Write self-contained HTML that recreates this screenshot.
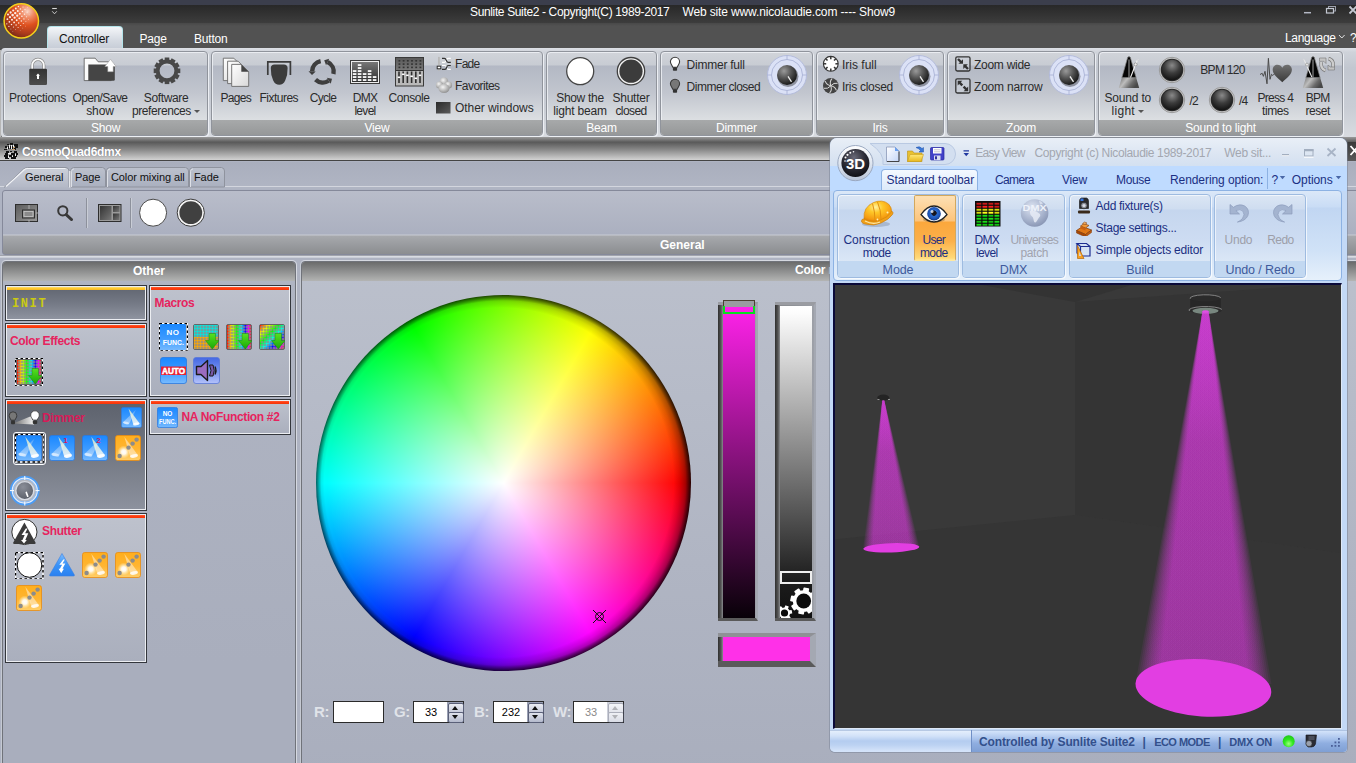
<!DOCTYPE html>
<html><head><meta charset="utf-8"><title>Sunlite Suite2</title>
<style>
*{box-sizing:border-box;margin:0;padding:0}
html,body{width:1356px;height:763px;overflow:hidden;background:#aeb3c1;font-family:"Liberation Sans",sans-serif;font-size:12px;color:#222}
.abs{position:absolute}
#top{position:absolute;left:0;top:0;width:1356px;height:138px;background:#4d4d4d}
#strip{position:absolute;left:0;top:0;width:1356px;height:5px;background:#3b3e4c}
#titlebar{position:absolute;left:0;top:5px;width:1356px;height:18px;background:linear-gradient(#282828,#3d3d3d)}
#title{position:absolute;left:470px;top:5px;color:#fff;font-size:12px;white-space:pre;letter-spacing:-0.3px}
#tabrow{position:absolute;left:0;top:23px;width:1356px;height:25px;background:linear-gradient(#484848,#525252 3px)}
.rtab{position:absolute;top:32px;letter-spacing:-0.2px;color:#fff;font-size:12px}
#tabsel{position:absolute;left:47px;top:26px;width:76px;height:23px;border-radius:4px 4px 0 0;background:linear-gradient(#f4f6f9,#d5dae2 60%,#c6ccd6);border:1px solid #b4e4ea;border-bottom:none}
#ribbon{position:absolute;left:1px;top:48px;width:1360px;height:90px;background:linear-gradient(#dde0e6,#cfd3da 4px,#c2c7d0 20px,#c9cdd5 60px,#d8dbe0 88px);border-radius:4px 0 0 4px}
.grp{position:absolute;top:51px;height:85px;border-radius:4px;border:1px solid #90949c;background:linear-gradient(#d1d4da 0,#c8ccd3 13px,#b3b8c4 14px,#c1c5ce 40px,#dcdfe2 68px);overflow:hidden;box-shadow:1px 1px 0 rgba(240,242,246,.9), inset 1px 1px 0 rgba(240,242,246,.8)}
.grp .cap{position:absolute;left:0;right:0;bottom:0;height:15px;background:linear-gradient(#a7a9aa,#969899);color:#fff;text-align:center;font-size:12px;line-height:16px;letter-spacing:-0.2px}
.lbl{position:absolute;color:#2b2b2b;font-size:12px;line-height:13px;text-align:center;white-space:nowrap;letter-spacing:-0.25px}

#bodybg{position:absolute;left:0;top:138px;width:1356px;height:625px;background:#aeb3c2}
#sep1{position:absolute;left:0;top:137px;width:1356px;height:5px;background:linear-gradient(#9a9a9a,#5c5c5c)}
#ctitle{position:absolute;left:0;top:142px;width:1356px;height:19px;background:linear-gradient(#585858,#8c8c8c 45%,#d2d2d2);border-bottom:1px solid #444}
#ctitle span{position:absolute;left:22px;top:3px;color:#fff;font-weight:bold;font-size:12px;letter-spacing:-0.3px;text-shadow:0 0 1px #667}
#tabs{position:absolute;left:0;top:162px;width:1356px;height:27px;background:linear-gradient(#a9aebd,#b0b5c3 24px,#d3d6de 24px,#d3d6de 25px,#b0b5c3 25px)}
.ptab{position:absolute;top:168px;height:19px;border:1px solid #8a8e98;border-bottom:none;border-radius:3px 3px 0 0;background:linear-gradient(#c2c6d1,#aeb3c1);font-size:12px;line-height:18px;text-align:center;color:#111;white-space:nowrap;box-shadow:inset 1px 1px 0 #dfe2e8}
#tbpanel{position:absolute;left:2px;top:190px;width:1360px;height:65px;border:1px solid #85899a;border-radius:3px;background:linear-gradient(#b9bdca,#abb0c0 43px,#c9ccd4 44px,#a7a9ad 45px,#8b8d90 63px)}
#tbhl{position:absolute;left:0;top:255px;width:1356px;height:3px;background:linear-gradient(#858890,#d9dce3 50%,#c3c7d0)}
#general{position:absolute;left:660px;top:238px;color:#fff;font-weight:bold;font-size:12px;letter-spacing:0}
.panel{position:absolute;top:261px;height:520px;border:1px solid #70737a;border-radius:4px 4px 0 0;box-shadow:1px 0 0 #d5d8e0,-1px 0 0 #c5c9d2, 0 -1px 0 #d5d8e0}
.panel .hd{position:absolute;left:0;right:0;top:0;height:19px;background:linear-gradient(#6a6b6b,#8f9090 50%,#b3b4b3);color:#fff;font-weight:bold;font-size:12px;letter-spacing:0;text-align:center;line-height:18px;border-radius:3px 3px 0 0}

#cmtitle{position:absolute;left:795px;top:263px;color:#fff;font-weight:bold;font-size:12px;letter-spacing:-0.2px;white-space:nowrap}
#wheel{position:absolute;left:316px;top:295px;width:375px;height:376px;border-radius:50%;background:radial-gradient(circle closest-side,rgba(0,0,0,0) 97.2%,rgba(0,0,0,.5) 100%),radial-gradient(circle 192px at calc(50% - 4.5px) calc(50% - 0.5px),rgba(0,0,0,0) 91%,rgba(0,0,0,.12) 94%,rgba(0,0,0,.3) 96.5%,rgba(0,0,0,.5) 98.5%,rgba(0,0,0,.7) 100%),radial-gradient(circle closest-side,#fff 0,rgba(255,255,255,0) 94%),conic-gradient(from 90deg,#f00,#f0f,#00f,#0ff,#0f0,#ff0,#f00)}
.sframe{position:absolute;background:linear-gradient(90deg,#2e2e2e,#555 3px,#8a8c90 5px,#8f9298 50%,#9da0a8);border-top:3px solid #9a9ca2;border-bottom:3px solid #5a5a5a;border-right:2px solid #a4a8b2}
.lab{position:absolute;top:703px;font-weight:bold;font-size:15px;color:#e0e3e9;letter-spacing:-0.3px}
.inp{position:absolute;top:701px;height:22px;width:51px;background:#fff;border:1px solid #2a2a2a;font-size:11px;line-height:20px;color:#000}
.inp span{position:absolute;left:0;width:34px;text-align:center}
.inp i{position:absolute;left:33px;top:0;width:16px;height:20px;background:#9aa0b4}
.inp i:before{content:"";position:absolute;left:1px;top:1px;width:14px;height:9px;border-radius:2px;border:1px solid #5a6078;background:linear-gradient(#eceef4,#c3c8d8) }
.inp i:after{content:"";position:absolute;left:1px;top:10px;width:14px;height:9px;border-radius:2px;border:1px solid #5a6078;background:linear-gradient(#dfe2ec,#b4bacc)}
.inp b{position:absolute;left:38px;width:0;height:0;border:3px solid transparent}
.inp b.u{top:2px;border-bottom:4px solid #111;border-top:none;top:4px}
.inp b.d{top:13px;border-top:4px solid #111;border-bottom:none}
#ev{position:absolute;left:830px;top:138px;width:517px;height:614px;border-radius:7px 7px 4px 5px;background:#c3d9f6;overflow:hidden;box-shadow:0 0 0 1px rgba(120,130,150,.5)}
#evtitle{position:absolute;left:0;top:0;width:517px;height:29px;background:linear-gradient(#e9eff7,#dbe5f2 60%,#d3e0f1)}
#evtabs{position:absolute;left:0;top:28px;width:517px;height:25px;background:#bfdbff}
#evrib{position:absolute;left:3px;top:52px;width:509px;height:91px;border:1px solid #8db2e3;border-radius:4px;background:linear-gradient(#dbe8f8,#c9dcf5 16px,#c1d6f2 17px,#d0e2f7 60px,#e6f0fb)}
.evt{position:absolute;top:35px;color:#1b2f82;font-size:12px;letter-spacing:-0.08px;white-space:nowrap}
#evsel{position:absolute;left:51px;top:31px;width:97px;height:23px;border:1px solid #8db2e3;border-bottom:none;border-radius:4px 4px 0 0;background:linear-gradient(#f4f9ff,#e1edfb 70%,#dbe8f8)}
.eg{position:absolute;top:56px;height:84px;border:1px solid #9ebbe0;border-radius:4px;background:linear-gradient(#dbe6f4,#cfddf0 14px,#c5d6ee 15px,#cddcf2 45px,#dbe7f6 67px);overflow:hidden;box-shadow:inset 1px 1px 0 rgba(255,255,255,.6),1px 1px 0 rgba(255,255,255,.7)}
.eg .cap{position:absolute;left:0;right:0;bottom:0;height:16px;background:#c2d8f1;color:#3e5a9c;text-align:center;font-size:12.500px;line-height:18px;letter-spacing:-0.1px}
.el{position:absolute;color:#1b2f82;font-size:12px;line-height:13px;text-align:center;white-space:nowrap;letter-spacing:-0.2px}
#view3d{position:absolute;left:3px;top:145px;width:509px;height:446px;background:#383838}
#evstat{position:absolute;left:0;top:592px;width:517px;height:22px;background:linear-gradient(#8aa4cc,#e4eefc 1px,#d2e2f8 6px,#b4ccf0 11px,#bcd2f2 15px,#d4e3f9 21px)}
#evstat2{position:absolute;left:141px;top:592px;width:376px;height:22px;background:linear-gradient(#8aa4cc,#d3e3fa 1px,#a9c3ec 40%,#8faee0 60%,#7f9fd4);border-left:1px solid #6f8fc6}
#evstat2 span{position:absolute;top:4.500px;font-weight:bold;font-size:12px;line-height:14px;color:#33508c;white-space:pre}
.dd{display:inline-block;width:0;height:0;border:3px solid transparent;border-top:3px solid #555;border-bottom:none;vertical-align:2px}
.ptx{position:absolute;top:170px;font-size:11px;line-height:15px;color:#111;white-space:nowrap;letter-spacing:-0.1px}
.obox{position:absolute;border:1px solid #33363c;box-shadow:inset 0 0 0 1px #eceef2}
.obox .strip{position:absolute;left:1px;right:1px;top:.5px;height:3.700px}
.ohd{position:absolute;font-weight:bold;font-size:12px;line-height:14px;letter-spacing:-0.35px;white-space:nowrap}
</style></head><body>
<div id="top">
<div id="strip"></div>
<div id="titlebar"></div>
<div id="title"><span style="letter-spacing:-0.36px">Sunlite Suite2 - Copyright(C) 1989-2017</span><span style="position:absolute;left:212.500px;top:0;letter-spacing:-0.14px">Web site www.nicolaudie.com ---- Show9</span></div>
<div id="tabrow"></div>
<div id="tabsel"></div>
<div class="rtab" style="left:59px;color:#111">Controller</div>
<div class="rtab" style="left:139.500px">Page</div>
<div class="rtab" style="left:194px">Button</div>
<div class="rtab" style="left:1285px;top:31px;letter-spacing:-0.35px">Language</div>
<svg class="abs" style="left:1300px;top:4px" width="56" height="12" viewBox="0 0 56 12"><path d="M4 8.700h7" stroke="#b4b8c4" stroke-width="1.500"/><rect x="28.500" y="2.500" width="7" height="4.500" fill="none" stroke="#9da1ad" stroke-width="1"/><rect x="26.500" y="4.500" width="7" height="4.500" fill="#333" stroke="#c4c8d2" stroke-width="1.200"/><path d="M49.500 2.500l7 7M56.500 2.500l-7 7" stroke="#c4c8d2" stroke-width="1.800"/></svg>
<svg class="abs" style="left:1338px;top:34px" width="8" height="6" viewBox="0 0 8 6"><path d="M1 1l2.800 3 2.800-3" fill="none" stroke="#e4e4e4" stroke-width="1"/></svg>
<div class="rtab" style="left:1350px;top:31px">?</div>
<div class="abs" style="left:0;top:50px;width:1px;height:88px;background:#b6b6b6"></div><div id="ribbon"></div>
<svg class="abs" style="left:2px;top:2px" width="40" height="40" viewBox="0 0 40 40"><defs><radialGradient id="orb" cx="0.68" cy="0.22" r="0.85"><stop offset="0" stop-color="#fad2c2"/><stop offset=".22" stop-color="#f08c66"/><stop offset=".48" stop-color="#de501e"/><stop offset=".78" stop-color="#a83a1c"/><stop offset="1" stop-color="#6c2618"/></radialGradient></defs><circle cx="19.300" cy="18.900" r="17.200" fill="url(#orb)" stroke="#f4d01c" stroke-width="1.500"/><g fill="#fff" fill-opacity=".9"><circle cx="4.8" cy="21.8" r="0.67"/><circle cx="6.9" cy="24.4" r="0.58"/><circle cx="8.9" cy="27.0" r="0.46"/><circle cx="10.9" cy="29.6" r="0.31"/><circle cx="5.4" cy="17.2" r="0.90"/><circle cx="7.4" cy="19.8" r="0.86"/><circle cx="9.5" cy="22.4" r="0.75"/><circle cx="11.5" cy="25.0" r="0.60"/><circle cx="13.5" cy="27.6" r="0.43"/><circle cx="6.0" cy="12.6" r="1.02"/><circle cx="8.0" cy="15.2" r="1.10"/><circle cx="10.0" cy="17.8" r="1.04"/><circle cx="12.1" cy="20.4" r="0.88"/><circle cx="14.1" cy="23.0" r="0.70"/><circle cx="16.1" cy="25.6" r="0.51"/><circle cx="18.2" cy="28.2" r="0.31"/><circle cx="8.6" cy="10.5" r="1.13"/><circle cx="10.6" cy="13.1" r="1.30"/><circle cx="12.6" cy="15.7" r="1.16"/><circle cx="14.7" cy="18.3" r="0.95"/><circle cx="16.7" cy="20.9" r="0.75"/><circle cx="18.7" cy="23.5" r="0.55"/><circle cx="20.8" cy="26.1" r="0.34"/><circle cx="11.2" cy="8.5" r="1.08"/><circle cx="13.2" cy="11.1" r="1.19"/><circle cx="15.2" cy="13.7" r="1.10"/><circle cx="17.3" cy="16.3" r="0.92"/><circle cx="19.3" cy="18.9" r="0.73"/><circle cx="21.3" cy="21.5" r="0.53"/><circle cx="23.4" cy="24.1" r="0.33"/><circle cx="13.8" cy="6.5" r="0.92"/><circle cx="15.8" cy="9.1" r="0.98"/><circle cx="17.8" cy="11.7" r="0.94"/><circle cx="19.9" cy="14.3" r="0.81"/><circle cx="21.9" cy="16.9" r="0.65"/><circle cx="23.9" cy="19.5" r="0.47"/><circle cx="16.4" cy="4.4" r="0.74"/><circle cx="18.4" cy="7.0" r="0.78"/><circle cx="20.4" cy="9.6" r="0.75"/><circle cx="22.5" cy="12.2" r="0.66"/><circle cx="24.5" cy="14.8" r="0.52"/><circle cx="26.5" cy="17.4" r="0.36"/><circle cx="21.0" cy="5.0" r="0.57"/><circle cx="23.0" cy="7.6" r="0.55"/><circle cx="25.1" cy="10.2" r="0.48"/><circle cx="27.1" cy="12.8" r="0.37"/><circle cx="25.6" cy="5.6" r="0.35"/></g></svg>
<svg class="abs" style="left:50px;top:7px" width="10" height="10" viewBox="0 0 10 10"><path d="M2.200 1.500h4.600" stroke="#d8d8d8" stroke-width="1.100"/><path d="M2.200 4.300l2.300 2.500l2.300-2.500" fill="none" stroke="#d8d8d8" stroke-width=".9"/></svg>
<div class="grp" style="left:3px;width:205px"><div class="cap">Show</div></div>
<div class="grp" style="left:211px;width:332px"><div class="cap">View</div></div>
<div class="grp" style="left:546px;width:111px"><div class="cap">Beam</div></div>
<div class="grp" style="left:660px;width:153px"><div class="cap">Dimmer</div></div>
<div class="grp" style="left:816px;width:128px"><div class="cap">Iris</div></div>
<div class="grp" style="left:947px;width:148px"><div class="cap">Zoom</div></div>
<div class="grp" style="left:1098px;width:245px"><div class="cap">Sound to light</div></div>
<!--RIB--><svg class="abs" style="left:26px;top:56px" width="24" height="30" viewBox="0 0 24 30"><defs><linearGradient id="lk" x1="0" y1="0" x2="0" y2="1"><stop offset="0" stop-color="#333"/><stop offset="1" stop-color="#4c4c4c"/></linearGradient></defs>
<path d="M6.2 13.5V9.2a5.8 5.8 0 0 1 11.6 0V13.5" fill="none" stroke="#8a8a8a" stroke-width="3.2"/>
<path d="M6.2 13.5V9.2a5.8 5.8 0 0 1 11.6 0V13.5" fill="none" stroke="#fafafa" stroke-width="1.8"/>
<rect x="3.2" y="12.7" width="17.8" height="16.2" rx="1.2" fill="url(#lk)"/>
<path d="M12 17.6l2 2.2h-1v3.2h-2v-3.2h-1z" fill="#fff"/></svg>
<div class="lbl" style="left:-22.5px;width:120px;top:92px;"><span style="letter-spacing:-0.28px">Protections</span></div>
<svg class="abs" style="left:83px;top:57px" width="34" height="25" viewBox="0 0 34 25"><path d="M1.2 1.2h11l3 3.6h13v18.8h-27z" fill="#fbfbfb" stroke="#555" stroke-width=".8"/>
<path d="M5.3 7.6h26.5v15a1.2 1.2 0 0 1-1.2 1.2H5.3z" fill="#454545"/>
<path d="M27.5 2.3l5.6 7.2h-2.9v5.2h-5.4v-5.2h-2.9z" fill="#fff" stroke="#9a9a9a" stroke-width=".5"/></svg>
<div class="lbl" style="left:40px;width:120px;top:92px;"><span style="letter-spacing:-0.56px">Open/Save</span><br><span style="letter-spacing:-0.13px">show</span></div>
<svg class="abs" style="left:153px;top:57px" width="28" height="28" viewBox="0 0 28 28"><g transform="translate(14 13.8)" fill="#484848"><circle r="9.3" fill="none" stroke="#484848" stroke-width="3.8"/><rect x="-2.3" y="-13.3" width="4.6" height="5" transform="rotate(0)"/><rect x="-2.3" y="-13.3" width="4.6" height="5" transform="rotate(30)"/><rect x="-2.3" y="-13.3" width="4.6" height="5" transform="rotate(60)"/><rect x="-2.3" y="-13.3" width="4.6" height="5" transform="rotate(90)"/><rect x="-2.3" y="-13.3" width="4.6" height="5" transform="rotate(120)"/><rect x="-2.3" y="-13.3" width="4.6" height="5" transform="rotate(150)"/><rect x="-2.3" y="-13.3" width="4.6" height="5" transform="rotate(180)"/><rect x="-2.3" y="-13.3" width="4.6" height="5" transform="rotate(210)"/><rect x="-2.3" y="-13.3" width="4.6" height="5" transform="rotate(240)"/><rect x="-2.3" y="-13.3" width="4.6" height="5" transform="rotate(270)"/><rect x="-2.3" y="-13.3" width="4.6" height="5" transform="rotate(300)"/><rect x="-2.3" y="-13.3" width="4.6" height="5" transform="rotate(330)"/></g></svg>
<div class="lbl" style="left:106px;width:120px;top:92px;"><span style="letter-spacing:-0.37px">Software</span><br><span style="letter-spacing:-0.40px">preferences</span> <span class="dd"></span></div>
<svg class="abs" style="left:222px;top:57px" width="28" height="31" viewBox="0 0 28 31"><defs><linearGradient id="pg" x1="0" y1="0" x2="1" y2="1"><stop offset="0" stop-color="#fff"/><stop offset="1" stop-color="#d8d8d8"/></linearGradient></defs>
<path d="M1.3 1.2h10.5l4.6 4.6v17.8h-15.1z" fill="url(#pg)" stroke="#6a6a6a" stroke-width=".9"/>
<path d="M5.6 4.2h10.5l4.6 4.6v17.8h-15.1z" fill="url(#pg)" stroke="#6a6a6a" stroke-width=".9"/>
<path d="M9.7 7.4h9.6l7.4 7.4v14.6h-17z" fill="url(#pg)" stroke="#6a6a6a" stroke-width=".9"/>
<path d="M19.3 7.4l7.4 7.4h-7.4z" fill="#444"/></svg>
<div class="lbl" style="left:175.8px;width:120px;top:92px;"><span style="letter-spacing:-0.70px">Pages</span></div>
<svg class="abs" style="left:265px;top:59px" width="28" height="28" viewBox="0 0 28 28"><path d="M2.800 16V2.800h22.600V16" fill="none" stroke="#3c3c3c" stroke-width="1.700"/>
<path d="M9.500 5.500h9.400q3.600 0 3.700 3.600q.2 7-2.400 12.400q-2 4.300-6 4.300q-4 0-6-4.300q-2.600-5.400-2.400-12.400q.1-3.600 3.700-3.600z" fill="#3c3c3c"/></svg>
<div class="lbl" style="left:218.8px;width:120px;top:92px;"><span style="letter-spacing:-0.52px">Fixtures</span></div>
<svg class="abs" style="left:308px;top:57px" width="30" height="30" viewBox="0 0 30 30"><g transform="translate(14.900 14.700)"><path d="M-2.25 -10.56A10.8 10.8 0 0 0 -10.79 -0.38" fill="none" stroke="#3e3e3e" stroke-width="4.400"/><path d="M-3.600 0L3.600 0L0 -3.800z" fill="#3e3e3e" transform="rotate(182) translate(10.8 0)"/><path d="M-7.37 7.90A10.8 10.8 0 0 0 5.88 9.06" fill="none" stroke="#3e3e3e" stroke-width="4.400"/><path d="M-3.600 0L3.600 0L0 -3.800z" fill="#3e3e3e" transform="rotate(57) translate(10.8 0)"/><path d="M10.56 2.25A10.8 10.8 0 0 0 4.73 -9.71" fill="none" stroke="#3e3e3e" stroke-width="4.400"/><path d="M-3.600 0L3.600 0L0 -3.800z" fill="#3e3e3e" transform="rotate(-64) translate(10.8 0)"/></g></svg>
<div class="lbl" style="left:263px;width:120px;top:92px;"><span style="letter-spacing:-0.70px">Cycle</span></div>
<svg class="abs" style="left:350px;top:60px" width="30" height="24" viewBox="0 0 30 24"><defs><linearGradient id="dl" x1="0" y1="0" x2="0" y2="1"><stop offset="0" stop-color="#777"/><stop offset="1" stop-color="#2e2e2e"/></linearGradient></defs><rect x=".5" y=".5" width="29" height="23" fill="#eee" stroke="#3a3a3a"/><rect x="2" y="2" width="26" height="20" fill="url(#dl)"/><rect x="2.8" y="19.1" width="3.6" height="1.9" fill="#f2f2f2"/><rect x="2.8" y="16.1" width="3.6" height="1.9" fill="#f2f2f2"/><rect x="2.8" y="13.100000000000001" width="3.6" height="1.9" fill="#f2f2f2"/><rect x="2.8" y="10.100000000000001" width="3.6" height="1.9" fill="#f2f2f2"/><rect x="7.8" y="19.1" width="3.6" height="1.9" fill="#f2f2f2"/><rect x="7.8" y="16.1" width="3.6" height="1.9" fill="#f2f2f2"/><rect x="7.8" y="13.100000000000001" width="3.6" height="1.9" fill="#f2f2f2"/><rect x="7.8" y="10.100000000000001" width="3.6" height="1.9" fill="#f2f2f2"/><rect x="7.8" y="7.100000000000001" width="3.6" height="1.9" fill="#f2f2f2"/><rect x="7.8" y="4.100000000000001" width="3.6" height="1.9" fill="#f2f2f2"/><rect x="12.8" y="19.1" width="3.6" height="1.9" fill="#f2f2f2"/><rect x="12.8" y="16.1" width="3.6" height="1.9" fill="#f2f2f2"/><rect x="12.8" y="13.100000000000001" width="3.6" height="1.9" fill="#f2f2f2"/><rect x="17.8" y="19.1" width="3.6" height="1.9" fill="#f2f2f2"/><rect x="17.8" y="16.1" width="3.6" height="1.9" fill="#f2f2f2"/><rect x="17.8" y="13.100000000000001" width="3.6" height="1.9" fill="#f2f2f2"/><rect x="17.8" y="10.100000000000001" width="3.6" height="1.9" fill="#f2f2f2"/><rect x="22.8" y="19.1" width="3.6" height="1.9" fill="#f2f2f2"/><rect x="22.8" y="16.1" width="3.6" height="1.9" fill="#f2f2f2"/></svg>
<div class="lbl" style="left:305px;width:120px;top:92px;"><span style="letter-spacing:-0.70px">DMX</span><br><span style="letter-spacing:-0.70px">level</span></div>
<svg class="abs" style="left:395px;top:57px" width="29" height="30" viewBox="0 0 29 30"><defs><linearGradient id="cs" x1="0" y1="0" x2="0" y2="1"><stop offset="0" stop-color="#5a5a5a"/><stop offset="1" stop-color="#777"/></linearGradient></defs><rect x=".5" y=".5" width="28" height="28.500" fill="#b9b9b9" stroke="#3a3a3a"/><rect x="1" y="1" width="27" height="12.200" fill="url(#cs)"/><rect x="1" y="13" width="27" height="1" fill="#333"/><rect x="3.5" y="3.0" width="1.8" height="1.600" fill="#333"/><rect x="3.5" y="6.3" width="1.8" height="1.600" fill="#333"/><rect x="3.5" y="9.6" width="1.8" height="1.600" fill="#333"/><rect x="7.7" y="3.0" width="1.8" height="1.600" fill="#333"/><rect x="7.7" y="6.3" width="1.8" height="1.600" fill="#333"/><rect x="7.7" y="9.6" width="1.8" height="1.600" fill="#333"/><rect x="11.9" y="3.0" width="1.8" height="1.600" fill="#333"/><rect x="11.9" y="6.3" width="1.8" height="1.600" fill="#333"/><rect x="11.9" y="9.6" width="1.8" height="1.600" fill="#333"/><rect x="16.1" y="3.0" width="1.8" height="1.600" fill="#333"/><rect x="16.1" y="6.3" width="1.8" height="1.600" fill="#333"/><rect x="16.1" y="9.6" width="1.8" height="1.600" fill="#333"/><rect x="20.3" y="3.0" width="1.8" height="1.600" fill="#333"/><rect x="20.3" y="6.3" width="1.8" height="1.600" fill="#333"/><rect x="20.3" y="9.6" width="1.8" height="1.600" fill="#333"/><rect x="24.5" y="3.0" width="1.8" height="1.600" fill="#333"/><rect x="24.5" y="6.3" width="1.8" height="1.600" fill="#333"/><rect x="24.5" y="9.6" width="1.8" height="1.600" fill="#333"/><rect x="3.2" y="14.500" width="1.6" height="11.500" fill="#2e2e2e"/><rect x="2.7" y="19.5" width="2.600" height="1.600" fill="#fff"/><rect x="7.4" y="14.500" width="1.6" height="11.500" fill="#2e2e2e"/><rect x="6.9" y="16.5" width="2.600" height="1.600" fill="#fff"/><rect x="11.600000000000001" y="14.500" width="1.6" height="11.500" fill="#2e2e2e"/><rect x="11.100000000000001" y="17.5" width="2.600" height="1.600" fill="#fff"/><rect x="15.8" y="14.500" width="1.6" height="11.500" fill="#2e2e2e"/><rect x="15.3" y="18.5" width="2.600" height="1.600" fill="#fff"/><rect x="20.0" y="14.500" width="1.6" height="11.500" fill="#2e2e2e"/><rect x="19.5" y="20.5" width="2.600" height="1.600" fill="#fff"/><rect x="24.2" y="14.500" width="1.6" height="11.500" fill="#2e2e2e"/><rect x="23.7" y="17.5" width="2.600" height="1.600" fill="#fff"/></svg>
<div class="lbl" style="left:349px;width:120px;top:92px;"><span style="letter-spacing:-0.42px">Console</span></div>
<svg class="abs" style="left:436px;top:56px" width="16" height="16" viewBox="0 0 16 16"><rect x="2" y=".9" width="1.800" height="13.900" fill="#b9b9b9"/><rect x="1.200" y="10.200" width="3.600" height="2.600" fill="#fff" stroke="#2e2e2e" stroke-width="1"/>
<path d="M6 6.300h2.500C10.500 6.300 10 2.300 12 2.300h2.800M6 9.500h3C11 9.500 10.500 13.300 12 13.300h2.800" fill="none" stroke="#fff" stroke-width="1.200"/>
<path d="M6 2.300h2.500C10.500 2.300 10 6.300 12 6.300h2.800M6 13.300h3C11 13.300 10.500 9.500 12 9.500h2.800" fill="none" stroke="#333" stroke-width="1.200"/></svg>
<div class="lbl" style="left:455px;top:58px;text-align:left;"><span style="letter-spacing:-0.70px">Fade</span></div>
<svg class="abs" style="left:435px;top:76px" width="18" height="18" viewBox="0 0 18 18"><defs><radialGradient id="fv" cx=".4" cy=".35" r=".7"><stop offset="0" stop-color="#f4f4f4"/><stop offset="1" stop-color="#8c8c8c"/></radialGradient></defs><circle cx="9" cy="5.500" r="4.300" fill="url(#fv)"/><circle cx="4.500" cy="9" r="3.600" fill="url(#fv)"/><circle cx="13.500" cy="9" r="3.600" fill="url(#fv)"/><ellipse cx="9" cy="12.500" rx="5.500" ry="4.500" fill="url(#fv)"/></svg>
<div class="lbl" style="left:455px;top:80px;text-align:left;"><span style="letter-spacing:-0.53px">Favorites</span></div>
<svg class="abs" style="left:436px;top:102px" width="15" height="12" viewBox="0 0 15 12"><defs><linearGradient id="ow" x1="0" y1="0" x2="1" y2="1"><stop offset="0" stop-color="#2a2a2a"/><stop offset="1" stop-color="#5c5c5c"/></linearGradient></defs><rect width="14.500" height="11.500" fill="url(#ow)"/></svg>
<div class="lbl" style="left:455px;top:102px;text-align:left;"><span style="letter-spacing:-0.06px">Other windows</span></div>
<svg class="abs" style="left:565px;top:56px" width="30" height="30" viewBox="0 0 30 30"><circle cx="15.200" cy="15.200" r="13.500" fill="#fff" stroke="#454545" stroke-width="1.300"/></svg>
<div class="lbl" style="left:520px;width:120px;top:92px;"><span style="letter-spacing:-0.30px">Show the</span><br><span style="letter-spacing:-0.17px">light beam</span></div>
<svg class="abs" style="left:616px;top:56px" width="30" height="30" viewBox="0 0 30 30"><circle cx="15" cy="15.200" r="13.700" fill="#f4f4f4" stroke="#404040" stroke-width="1.300"/><circle cx="15" cy="15.200" r="11.600" fill="#3c3c3c"/></svg>
<div class="lbl" style="left:571px;width:120px;top:92px;"><span style="letter-spacing:-0.24px">Shutter</span><br><span style="letter-spacing:-0.61px">closed</span></div>
<svg class="abs" style="left:669.3px;top:56px" width="12" height="16" viewBox="0 0 12 16"><path d="M6 1.200a4.600 4.600 0 0 1 4.600 4.600c0 2.200-1.600 3.200-2.400 5.400h-4.400c-.8-2.200-2.400-3.200-2.400-5.400a4.600 4.600 0 0 1 4.600-4.600z" fill="#fff" stroke="#3a3a3a" stroke-width="1.100"/><rect x="3.900" y="11.200" width="4.200" height="3.600" rx=".8" fill="#333"/></svg>
<svg class="abs" style="left:669.3px;top:77.5px" width="12" height="16" viewBox="0 0 12 16"><path d="M6 1.200a4.600 4.600 0 0 1 4.600 4.600c0 2.200-1.600 3.200-2.400 5.400h-4.400c-.8-2.200-2.400-3.200-2.400-5.400a4.600 4.600 0 0 1 4.600-4.600z" fill="#777" stroke="#3a3a3a" stroke-width="1.100"/><rect x="3.900" y="11.200" width="4.200" height="3.600" rx=".8" fill="#333"/></svg>
<div class="lbl" style="left:686.6px;top:58.5px;text-align:left;"><span style="letter-spacing:-0.24px">Dimmer full</span></div>
<div class="lbl" style="left:686.6px;top:80.5px;text-align:left;"><span style="letter-spacing:-0.49px">Dimmer closed</span></div>
<svg class="abs" style="left:766px;top:53.7px" width="42" height="42" viewBox="0 0 42 42"><defs><radialGradient id="kn1" cx=".35" cy=".3" r=".8"><stop offset="0" stop-color="#9a9a9a"/><stop offset=".45" stop-color="#555"/><stop offset="1" stop-color="#0c0c0c"/></radialGradient></defs>
<circle cx="21" cy="21" r="19.500" fill="#dbe1f6" stroke="#b4bcdc" stroke-width="1"/><circle cx="21" cy="21" r="15.500" fill="none" stroke="#aab3d6" stroke-width=".9"/>
<path d="M21 1.500v4M21 36.500v4M1.500 21h4M36.500 21h4" stroke="#aab3d6" stroke-width=".9"/>
<circle cx="22" cy="22.500" r="10.500" fill="#000" fill-opacity=".35"/><circle cx="21" cy="21" r="10" fill="url(#kn1)"/>
<path d="M22.300 22.800l2.900 4.600" stroke="#eee" stroke-width="1.300" stroke-linecap="round"/></svg>
<svg class="abs" style="left:822px;top:55.3px" width="18" height="18" viewBox="0 0 18 18"><g transform="translate(8.800 8.800)"><circle r="7.400" fill="#fff" stroke="#333" stroke-width="1.100"/><path d="M0 -7.200v2.600" stroke="#333" stroke-width="1.500" transform="rotate(0)"/><path d="M0 -7.200v2.600" stroke="#333" stroke-width="1.500" transform="rotate(45)"/><path d="M0 -7.200v2.600" stroke="#333" stroke-width="1.500" transform="rotate(90)"/><path d="M0 -7.200v2.600" stroke="#333" stroke-width="1.500" transform="rotate(135)"/><path d="M0 -7.200v2.600" stroke="#333" stroke-width="1.500" transform="rotate(180)"/><path d="M0 -7.200v2.600" stroke="#333" stroke-width="1.500" transform="rotate(225)"/><path d="M0 -7.200v2.600" stroke="#333" stroke-width="1.500" transform="rotate(270)"/><path d="M0 -7.200v2.600" stroke="#333" stroke-width="1.500" transform="rotate(315)"/></g></svg>
<svg class="abs" style="left:822px;top:77.4px" width="18" height="18" viewBox="0 0 18 18"><g transform="translate(8.800 8.800)"><circle r="7.800" fill="#444"/><path d="M0 0q3-3.500 6.800-2.500" fill="none" stroke="#d8d8d8" stroke-width="1" transform="rotate(0)"/><path d="M0 0q3-3.500 6.800-2.500" fill="none" stroke="#d8d8d8" stroke-width="1" transform="rotate(60)"/><path d="M0 0q3-3.500 6.800-2.500" fill="none" stroke="#d8d8d8" stroke-width="1" transform="rotate(120)"/><path d="M0 0q3-3.500 6.800-2.500" fill="none" stroke="#d8d8d8" stroke-width="1" transform="rotate(180)"/><path d="M0 0q3-3.500 6.800-2.500" fill="none" stroke="#d8d8d8" stroke-width="1" transform="rotate(240)"/><path d="M0 0q3-3.500 6.800-2.500" fill="none" stroke="#d8d8d8" stroke-width="1" transform="rotate(300)"/></g></svg>
<div class="lbl" style="left:842px;top:58.5px;text-align:left;"><span style="letter-spacing:0.00px">Iris full</span></div>
<div class="lbl" style="left:842px;top:80.5px;text-align:left;"><span style="letter-spacing:-0.28px">Iris closed</span></div>
<svg class="abs" style="left:898px;top:53.7px" width="42" height="42" viewBox="0 0 42 42"><defs><radialGradient id="kn2" cx=".35" cy=".3" r=".8"><stop offset="0" stop-color="#9a9a9a"/><stop offset=".45" stop-color="#555"/><stop offset="1" stop-color="#0c0c0c"/></radialGradient></defs>
<circle cx="21" cy="21" r="19.500" fill="#dbe1f6" stroke="#b4bcdc" stroke-width="1"/><circle cx="21" cy="21" r="15.500" fill="none" stroke="#aab3d6" stroke-width=".9"/>
<path d="M21 1.500v4M21 36.500v4M1.500 21h4M36.500 21h4" stroke="#aab3d6" stroke-width=".9"/>
<circle cx="22" cy="22.500" r="10.500" fill="#000" fill-opacity=".35"/><circle cx="21" cy="21" r="10" fill="url(#kn2)"/>
<path d="M22.300 22.800l2.900 4.600" stroke="#eee" stroke-width="1.300" stroke-linecap="round"/></svg>
<svg class="abs" style="left:955px;top:56px" width="16" height="16" viewBox="0 0 16 16"><rect x=".8" y=".8" width="14.200" height="14.200" rx="1.400" fill="#ccd0d8" fill-opacity=".6" stroke="#333" stroke-width="1.300"/><path d="M8 7.800H3.400L8 3.200z" fill="#333"/><path d="M3 3l3.500 3.500" stroke="#333" stroke-width="2.400"/><path d="M8.300 8.300h4.600L8.300 12.900z" fill="#333"/><path d="M13 13l-3.500-3.500" stroke="#333" stroke-width="2.400"/></svg>
<svg class="abs" style="left:955px;top:78px" width="16" height="16" viewBox="0 0 16 16"><rect x=".8" y=".8" width="14.200" height="14.200" rx="1.400" fill="#ccd0d8" fill-opacity=".6" stroke="#333" stroke-width="1.300"/><path d="M2.700 2.800h4.600L2.700 7.400z" fill="#333"/><path d="M4.300 4.400l3 3" stroke="#333" stroke-width="2.400"/><path d="M13.200 13.200h-4.600L13.200 8.600z" fill="#333"/><path d="M11.600 11.600l-3-3" stroke="#333" stroke-width="2.400"/></svg>
<div class="lbl" style="left:974px;top:58.5px;text-align:left;"><span style="letter-spacing:-0.27px">Zoom wide</span></div>
<div class="lbl" style="left:974px;top:80.5px;text-align:left;"><span style="letter-spacing:-0.20px">Zoom narrow</span></div>
<svg class="abs" style="left:1048px;top:53.7px" width="42" height="42" viewBox="0 0 42 42"><defs><radialGradient id="kn3" cx=".35" cy=".3" r=".8"><stop offset="0" stop-color="#9a9a9a"/><stop offset=".45" stop-color="#555"/><stop offset="1" stop-color="#0c0c0c"/></radialGradient></defs>
<circle cx="21" cy="21" r="19.500" fill="#dbe1f6" stroke="#b4bcdc" stroke-width="1"/><circle cx="21" cy="21" r="15.500" fill="none" stroke="#aab3d6" stroke-width=".9"/>
<path d="M21 1.500v4M21 36.500v4M1.500 21h4M36.500 21h4" stroke="#aab3d6" stroke-width=".9"/>
<circle cx="22" cy="22.500" r="10.500" fill="#000" fill-opacity=".35"/><circle cx="21" cy="21" r="10" fill="url(#kn3)"/>
<path d="M22.300 22.800l2.900 4.600" stroke="#eee" stroke-width="1.300" stroke-linecap="round"/></svg>
<svg class="abs" style="left:1116.2px;top:55px" width="26" height="34" viewBox="0 0 26 34"><defs><linearGradient id="mt1" x1="0" y1="0" x2="1" y2=".4"><stop offset="0" stop-color="#6e6e6e"/><stop offset=".4" stop-color="#bdbdbd"/><stop offset=".75" stop-color="#6a6a6a"/><stop offset="1" stop-color="#484848"/></linearGradient></defs>
<path d="M11.600 2.600q1.400-2.200 2.800 0l5.800 20.200h-14.400z" fill="#050505" stroke="#8c8c8c" stroke-width=".7"/><path d="M13 4.500v18" stroke="#b4b4b4" stroke-width=".9"/><path d="M5.800 22.700h14.400l3 10.200h-20.400z" fill="url(#mt1)"/></svg>
<svg class="abs" style="left:1128px;top:58px" width="12" height="22" viewBox="0 0 12 22"><path d="M2.500 19.500L9.200 2.500" stroke="#f2f2f2" stroke-width="1.100"/><path d="M9.200 2.500l1.500-1.500" stroke="#ddd" stroke-width=".8"/><circle cx="7.600" cy="6.400" r="1.500" fill="#eee" stroke="#666" stroke-width=".5"/></svg>
<div class="lbl" style="left:1067.8px;width:120px;top:92px;"><span style="letter-spacing:-0.18px">Sound to</span><br><span style="letter-spacing:0.30px">light</span> <span class="dd"></span></div>
<svg class="abs" style="left:1158.1px;top:55.8px" width="28" height="28" viewBox="0 0 28 28"><defs><radialGradient id="rb1" cx=".5" cy=".28" r=".75"><stop offset="0" stop-color="#8a8a8a"/><stop offset=".5" stop-color="#3c3c3c"/><stop offset="1" stop-color="#0e0e0e"/></radialGradient></defs>
<circle cx="14" cy="14" r="12.700" fill="#c9c9c9" stroke="#8e8e8e" stroke-width=".8"/><circle cx="14" cy="14" r="11.300" fill="#2a2a2a"/><circle cx="14" cy="14" r="10.300" fill="url(#rb1)"/></svg>
<svg class="abs" style="left:1158.1px;top:85.8px" width="28" height="28" viewBox="0 0 28 28"><defs><radialGradient id="rb2" cx=".5" cy=".28" r=".75"><stop offset="0" stop-color="#8a8a8a"/><stop offset=".5" stop-color="#3c3c3c"/><stop offset="1" stop-color="#0e0e0e"/></radialGradient></defs>
<circle cx="14" cy="14" r="12.700" fill="#c9c9c9" stroke="#8e8e8e" stroke-width=".8"/><circle cx="14" cy="14" r="11.300" fill="#2a2a2a"/><circle cx="14" cy="14" r="10.300" fill="url(#rb2)"/></svg>
<svg class="abs" style="left:1208px;top:85.8px" width="28" height="28" viewBox="0 0 28 28"><defs><radialGradient id="rb3" cx=".5" cy=".28" r=".75"><stop offset="0" stop-color="#8a8a8a"/><stop offset=".5" stop-color="#3c3c3c"/><stop offset="1" stop-color="#0e0e0e"/></radialGradient></defs>
<circle cx="14" cy="14" r="12.700" fill="#c9c9c9" stroke="#8e8e8e" stroke-width=".8"/><circle cx="14" cy="14" r="11.300" fill="#2a2a2a"/><circle cx="14" cy="14" r="10.300" fill="url(#rb3)"/></svg>
<div class="lbl" style="left:1200.3px;top:64px;text-align:left;"><span style="letter-spacing:-0.70px">BPM 120</span></div>
<div class="lbl" style="left:1189.4px;top:94.5px;text-align:left;"><span style="letter-spacing:-0.60px">/2</span></div>
<div class="lbl" style="left:1238.9px;top:94.5px;text-align:left;"><span style="letter-spacing:-0.60px">/4</span></div>
<svg class="abs" style="left:1258px;top:56px" width="36" height="32" viewBox="0 0 36 32"><defs><linearGradient id="ht" x1="0" y1="0" x2="0" y2="1"><stop offset="0" stop-color="#707070"/><stop offset="1" stop-color="#3a3a3a"/></linearGradient></defs>
<path d="M2 18.500l2.200-1.200l1.200 3l1.600-5l2 12.500l1.400-25.500l1.600 21l1.500-5l1.300 1.200l3-3" fill="none" stroke="#4a4a4a" stroke-width="1"/>
<path d="M24.300 26.200c-5-4.200-9.600-8-9.600-12.400c0-3 2.200-5 4.800-5c2 0 3.800 1.100 4.800 3c1-1.900 2.800-3 4.800-3c2.600 0 4.800 2 4.800 5c0 4.400-4.600 8.200-9.600 12.400z" fill="url(#ht)"/></svg>
<div class="lbl" style="left:1215.4px;width:120px;top:92px;"><span style="letter-spacing:-0.70px">Press 4</span><br><span style="letter-spacing:-0.41px">times</span></div>
<svg class="abs" style="left:1299.7px;top:55px" width="26" height="34" viewBox="0 0 26 34"><defs><linearGradient id="mt2" x1="0" y1="0" x2="1" y2=".4"><stop offset="0" stop-color="#6e6e6e"/><stop offset=".4" stop-color="#bdbdbd"/><stop offset=".75" stop-color="#6a6a6a"/><stop offset="1" stop-color="#484848"/></linearGradient></defs>
<path d="M11.600 2.600q1.400-2.200 2.800 0l5.800 20.200h-14.400z" fill="#050505" stroke="#8c8c8c" stroke-width=".7"/><path d="M13 4.500v18" stroke="#b4b4b4" stroke-width=".9"/><path d="M5.800 22.700h14.400l3 10.200h-20.400z" fill="url(#mt2)"/></svg>
<svg class="abs" style="left:1302px;top:57px" width="34" height="24" viewBox="0 0 34 24"><path d="M2.200 3l7.600 17" stroke="#e8e8e8" stroke-width="1.100"/><path d="M1 2l2 1.500" stroke="#ddd" stroke-width=".8"/><circle cx="5" cy="7.600" r="1.500" fill="#e4e4e4" stroke="#777" stroke-width=".5"/>
<path d="M23.500 13.500q-5-1.500-4.300-8.500" fill="none" stroke="#777" stroke-width="3.600"/><path d="M23.500 13.500q-5-1.500-4.300-8.500" fill="none" stroke="#cdcdcd" stroke-width="2.300"/><path d="M17.500 1h6.500v5.500l-2.200-2.200h-4.300z" fill="#c4c4c4" stroke="#777" stroke-width=".6"/>
<path d="M26.500 1.500q5.500 1.500 4.500 8.500" fill="none" stroke="#777" stroke-width="3.600"/><path d="M26.500 1.500q5.500 1.500 4.500 8.500" fill="none" stroke="#cdcdcd" stroke-width="2.300"/><path d="M32.500 13h-6.500v-5l2.200 2h4.300z" fill="#c4c4c4" stroke="#777" stroke-width=".6"/></svg>
<div class="lbl" style="left:1257.6px;width:120px;top:92px;"><span style="letter-spacing:-0.70px">BPM</span><br><span style="letter-spacing:-0.48px">reset</span></div><!--/RIB-->
</div>

<div id="bodybg"></div>
<div id="sep1"></div>
<div id="ctitle"><span>CosmoQuad6dmx</span></div>
<svg class="abs" style="left:3px;top:143px" width="17" height="17" viewBox="0 0 17 17" shape-rendering="crispEdges"><g fill="#111"><rect x="4" y="1" width="2" height="1"/><rect x="7" y="0" width="3" height="2"/><rect x="11" y="1" width="4" height="2"/><rect x="2" y="3" width="2" height="2"/><rect x="5" y="3" width="1" height="3"/><rect x="7" y="3" width="1" height="3"/><rect x="9" y="3" width="1" height="3"/><rect x="12" y="3" width="3" height="2"/><rect x="1" y="6" width="3" height="1"/><rect x="11" y="5" width="2" height="2"/><rect x="3" y="8" width="3" height="2"/><rect x="7" y="8" width="2" height="1"/><rect x="11" y="8" width="3" height="2"/><rect x="2" y="10" width="3" height="2"/><rect x="8" y="10" width="4" height="2"/><rect x="13" y="10" width="2" height="2"/><rect x="1" y="12" width="4" height="2"/><rect x="6" y="12" width="3" height="2"/><rect x="10" y="12" width="4" height="2"/><rect x="2" y="14" width="4" height="2"/><rect x="8" y="14" width="5" height="2"/></g><g fill="#f2f2f2"><rect x="6" y="2" width="1" height="3"/><rect x="8" y="2" width="1" height="4"/><rect x="10" y="2" width="1" height="3"/><rect x="4" y="4" width="1" height="2"/><rect x="5" y="10" width="3" height="1"/><rect x="12" y="11" width="1" height="2"/><rect x="5" y="13" width="1" height="2"/><rect x="9" y="13" width="1" height="1"/></g><g fill="#c8a070"><rect x="9" y="6" width="3" height="1"/><rect x="10" y="4" width="2" height="1"/></g></svg>
<div id="tabs"></div>
<svg class="abs" style="left:0;top:162px" width="240" height="27" viewBox="0 0 240 27"><defs><linearGradient id="tg1" x1="0" y1="0" x2="0" y2="1"><stop offset="0" stop-color="#cdd1da"/><stop offset="1" stop-color="#b3b8c6"/></linearGradient><linearGradient id="tg2" x1="0" y1="0" x2="0" y2="1"><stop offset="0" stop-color="#bcc1cd"/><stop offset="1" stop-color="#aab0bf"/></linearGradient></defs>

<path d="M70.500 25v-16q0-3 3-3.500h29q3 .5 3 3.500v16z" fill="url(#tg2)" stroke="#8f939e" stroke-width="1"/><path d="M71.500 25v-15.500q0-2.500 2.500-2.500" fill="none" stroke="#dcdfe6" stroke-width="1"/>
<path d="M106.500 25v-16q0-3 3-3.500h76q3 .5 3 3.500v16z" fill="url(#tg2)" stroke="#8f939e" stroke-width="1"/><path d="M107.500 25v-15.500q0-2.500 2.500-2.500" fill="none" stroke="#dcdfe6" stroke-width="1"/>
<path d="M189.500 25v-16q0-3 3-3.500h29q3 .5 3 3.500v16z" fill="url(#tg2)" stroke="#8f939e" stroke-width="1"/><path d="M190.500 25v-15.500q0-2.500 2.500-2.500" fill="none" stroke="#dcdfe6" stroke-width="1"/>
<path d="M4 25.500L23.500 7q2-1.500 4-1.500h38.500q3 .5 3 3.500v16.500z" fill="url(#tg1)"/><path d="M4 25.500L23.500 7q2-1.500 4-1.500h38.500q3 .5 3 3.500v16" fill="none" stroke="#8f939e" stroke-width="1"/><path d="M6 24.500L24.500 7.500q1.500-1 3-1h38" fill="none" stroke="#f0f2f6" stroke-width="1.200"/><path d="M69.800 9v16.500" stroke="#f4f5f8" stroke-width="1.200"/>
</svg>
<div class="ptx" style="left:25px">General</div><div class="ptx" style="left:75px">Page</div><div class="ptx" style="left:111px">Color mixing all</div><div class="ptx" style="left:194px">Fade</div>

<div id="tbpanel"></div>
<div id="tbhl"></div>
<svg class="abs" style="left:10px;top:196px" width="200" height="36" viewBox="0 0 200 36"><defs><linearGradient id="ti" x1="0" y1="0" x2="1" y2="1"><stop offset="0" stop-color="#5a5a5a"/><stop offset="1" stop-color="#9a9a9a"/></linearGradient><linearGradient id="ti2" x1="0" y1="0" x2="1" y2="1"><stop offset="0" stop-color="#333"/><stop offset="1" stop-color="#777"/></linearGradient></defs>
<rect x="5.500" y="8.500" width="22" height="17" fill="url(#ti)" stroke="#2e2e2e" stroke-width="1"/><path d="M19 9v4M28 17h-2M19 26v-2" stroke="#bbb" stroke-width=".8"/><rect x="12.500" y="14" width="12" height="8" fill="#8a8a8a" stroke="#2e2e2e" stroke-width="1"/><rect x="14" y="15.500" width="9" height="5" fill="none" stroke="#c8c8c8" stroke-width=".8"/>
<circle cx="52.800" cy="14.800" r="4.600" fill="none" stroke="#383838" stroke-width="2"/><path d="M56.200 18.600l5.400 5" stroke="#383838" stroke-width="2.800" stroke-linecap="round"/>
<path d="M76.500 2v30" stroke="#8d919c" stroke-width="1"/><path d="M77.500 2v30" stroke="#c9cdd6" stroke-width="1"/>
<rect x="88.500" y="8.500" width="22.500" height="17" fill="#9a9a9a" stroke="#2e2e2e" stroke-width="1"/><rect x="90" y="10" width="11.500" height="14" fill="url(#ti2)"/><rect x="103" y="10" width="6.500" height="6" fill="url(#ti2)"/><rect x="103" y="17.500" width="6.500" height="6.500" fill="url(#ti2)"/>
<path d="M120.500 2v30" stroke="#8d919c" stroke-width="1"/><path d="M121.500 2v30" stroke="#c9cdd6" stroke-width="1"/>
<circle cx="143.100" cy="16.700" r="13.500" fill="#fff" stroke="#4a4a4a" stroke-width="1"/>
<circle cx="180.800" cy="16.700" r="13.600" fill="#f6f6f6" stroke="#3a3a3a" stroke-width="1"/><circle cx="180.800" cy="16.700" r="11.400" fill="#404040"/>
</svg>
<div id="general">General</div>
<div class="panel" style="left:2px;width:294px;background:linear-gradient(#b0b5c3,#a9aebd 400px)"><div class="hd">Other</div></div>
<div class="panel" style="left:301px;width:1060px;background:linear-gradient(#bbc0cc,#b0b5c3 300px,#a9aebd)"><div class="hd"></div></div>

<!--LEFT--><svg width="0" height="0" style="position:absolute"><defs>
<linearGradient id="gbl" x1="0" y1="0" x2="0" y2="1"><stop offset="0" stop-color="#1a88ff"/><stop offset=".55" stop-color="#3d9bff"/><stop offset="1" stop-color="#78bbff"/></linearGradient>
<linearGradient id="gor" x1="0" y1="0" x2="0" y2="1"><stop offset="0" stop-color="#ffae1c"/><stop offset=".55" stop-color="#ffb532"/><stop offset="1" stop-color="#ffcf6a"/></linearGradient>
<linearGradient id="gbm" x1="0" y1="0" x2="0" y2="1"><stop offset="0" stop-color="#f4f6c0" stop-opacity=".75"/><stop offset="1" stop-color="#ffffff" stop-opacity=".8"/></linearGradient>
<linearGradient id="gbm2" x1="0" y1="0" x2="0" y2="1"><stop offset="0" stop-color="#dfe8f0" stop-opacity=".25"/><stop offset="1" stop-color="#ffffff" stop-opacity=".45"/></linearGradient>
<radialGradient id="glow"><stop offset="0" stop-color="#fff"/><stop offset=".35" stop-color="#fff" stop-opacity=".9"/><stop offset="1" stop-color="#fff8c0" stop-opacity="0"/></radialGradient>
<linearGradient id="ggr" x1="0" y1="0" x2="0" y2="1"><stop offset="0" stop-color="#58e020"/><stop offset="1" stop-color="#18a808"/></linearGradient>
<linearGradient id="grb" x1="0" y1="0" x2="1" y2="0"><stop offset="0" stop-color="#ff0000"/><stop offset=".2" stop-color="#ffff00"/><stop offset=".42" stop-color="#00ff00"/><stop offset=".6" stop-color="#00ffff"/><stop offset=".75" stop-color="#0000ff"/><stop offset=".9" stop-color="#ff00ff"/><stop offset="1" stop-color="#ff0000"/></linearGradient>
<linearGradient id="grb2" x1="0" y1="0" x2="1" y2="1"><stop offset="0" stop-color="#ff0000"/><stop offset=".18" stop-color="#ffff00"/><stop offset=".38" stop-color="#00ff00"/><stop offset=".55" stop-color="#00ffff"/><stop offset=".72" stop-color="#0000ff"/><stop offset=".88" stop-color="#ff00ff"/><stop offset="1" stop-color="#ff0000"/></linearGradient>
<linearGradient id="gco" x1="0" y1="0" x2="0" y2="1"><stop offset="0" stop-color="#00e8e0"/><stop offset=".48" stop-color="#00e8e0"/><stop offset=".52" stop-color="#ffa800"/><stop offset="1" stop-color="#ffa800"/></linearGradient>
<pattern id="pgrid" width="3" height="3" patternUnits="userSpaceOnUse"><rect width="3" height="3" fill="#000"/><circle cx="1.500" cy="1.500" r="1.200" fill="#fff"/></pattern>
<mask id="mgrid"><rect x="1" y="1" width="24" height="24" fill="url(#pgrid)"/></mask>
<g id="ibeam"><rect x=".5" y=".5" width="25" height="25" rx="2.200" fill="url(#gbl)" stroke="#2a7ae0" stroke-width=".8"/><path d="M18.500 3.500L2.500 19q2 3.600 8 1z" fill="url(#gbm2)"/><ellipse cx="6.300" cy="19.800" rx="4" ry="1.600" fill="#fff" fill-opacity=".55" transform="rotate(12 6.300 19.800)"/><path d="M9.300 1.800L15.200 21.500q4 1.500 7.600-1.500z" fill="url(#gbm)"/><ellipse cx="19" cy="21" rx="4" ry="1.700" fill="#fff" fill-opacity=".9" transform="rotate(-12 19 21)"/></g>
<g id="iorg"><rect x=".5" y=".5" width="25" height="25" rx="2.200" fill="url(#gor)" stroke="#e88c10" stroke-width=".8"/><path d="M9.300 1.800L15.200 21.500q4 1.500 7.600-1.500z" fill="#fff" fill-opacity=".45"/><ellipse cx="19" cy="21" rx="4" ry="1.700" fill="#fff" fill-opacity=".8" transform="rotate(-12 19 21)"/><circle cx="8.800" cy="17" r="6.500" fill="url(#glow)"/><g fill="#8c8c8c"><circle cx="4.600" cy="21" r="2.200"/><circle cx="13.500" cy="12.600" r="2.200"/><circle cx="17.600" cy="8.600" r="2.200"/><circle cx="21.600" cy="4.600" r="2.200"/></g></g>
<g id="garrow"><path d="M16 9.500h6.500v7h3.500l-6.750 8.500l-6.750-8.500h3.500z" fill="url(#ggr)" stroke="#109008" stroke-width=".5"/></g>
</defs></svg>
<div class="obox" style="left:5px;top:285px;width:142px;height:36px;background:linear-gradient(#5f646f,#747985 50%,#9095a1)"><div class="strip" style="background:linear-gradient(#ffe070,#ffc830 50%,#f8b820)"></div></div>
<div class="abs" style="left:12px;top:297px;font-family:'Liberation Mono',monospace;font-weight:bold;font-size:12px;letter-spacing:1.600px;color:#caca12;line-height:14px">INIT</div>
<div class="obox" style="left:5px;top:323px;width:142px;height:74px;background:linear-gradient(#bec2cd,#aaafbd)"><div class="strip" style="background:linear-gradient(#ff5a2c,#ff3a10 50%,#f03808)"></div></div>
<div class="obox" style="left:149px;top:285px;width:142px;height:112px;background:linear-gradient(#bec2cd,#aaafbd)"><div class="strip" style="background:linear-gradient(#ff5a2c,#ff3a10 50%,#f03808)"></div></div>
<div class="obox" style="left:149px;top:399px;width:142px;height:36px;background:linear-gradient(#bec2cd,#aaafbd)"><div class="strip" style="background:linear-gradient(#ff5a2c,#ff3a10 50%,#f03808)"></div></div>
<div class="obox" style="left:5px;top:399px;width:142px;height:112px;background:linear-gradient(#5c616c,#6e737e 40%,#8d929e)"><div class="strip" style="background:linear-gradient(#ff5a2c,#ff3a10 50%,#f03808)"></div></div>
<div class="obox" style="left:5px;top:513px;width:142px;height:150px;background:linear-gradient(#bec2cd,#aaafbd)"><div class="strip" style="background:linear-gradient(#ff5a2c,#ff3a10 50%,#f03808)"></div></div>
<div class="ohd" style="left:10px;top:334px;color:#e6245e">Color Effects</div>
<div class="ohd" style="left:154.5px;top:296px;color:#e6245e">Macros</div>
<div class="ohd" style="left:42px;top:410.5px;color:#d41c58">Dimmer</div>
<div class="ohd" style="left:42px;top:524px;color:#e6245e">Shutter</div>
<div class="ohd" style="left:181.5px;top:410px;color:#e6245e">NA NoFunction #2</div>
<svg class="abs" style="left:15px;top:357.5px" width="28" height="28.5"><rect x=".5" y=".5" width="27" height="27.5" fill="none" stroke="#fff" stroke-width="1.400"/><rect x=".5" y=".5" width="27" height="27.5" fill="none" stroke="#000" stroke-width="1.400" stroke-dasharray="2.500 2.500"/></svg>
<svg class="abs" style="left:16px;top:358.5px" width="26" height="26" viewBox="0 0 26 26"><rect x=".5" y=".5" width="25" height="25" rx="1.500" fill="#8c8c8c" stroke="#555" stroke-width=".8"/><rect x="1" y="1" width="24" height="24" fill="url(#grb)" mask="url(#mgrid)"/><use href="#garrow"/></svg>
<svg class="abs" style="left:158.5px;top:322.5px" width="29" height="28.5"><rect x=".5" y=".5" width="28" height="27.5" fill="none" stroke="#fff" stroke-width="1.400"/><rect x=".5" y=".5" width="28" height="27.5" fill="none" stroke="#000" stroke-width="1.400" stroke-dasharray="2.500 2.500"/></svg>
<svg class="abs" style="left:160px;top:323.5px" width="26" height="26.5" viewBox="0 0 26 26.500"><rect x="0" y="0" width="26" height="26.500" rx="1.500" fill="url(#gbl)"/><text x="13" y="11" font-family="Liberation Sans,sans-serif" font-weight="bold" font-size="8" fill="#fff" text-anchor="middle" letter-spacing=".4">NO</text><text x="13.300" y="21" font-family="Liberation Sans,sans-serif" font-weight="bold" font-size="8" fill="#fff" text-anchor="middle" textLength="21" lengthAdjust="spacingAndGlyphs">FUNC.</text></svg>
<svg class="abs" style="left:193px;top:323.5px" width="26" height="26" viewBox="0 0 26 26"><rect x=".5" y=".5" width="25" height="25" rx="1.500" fill="#8c8c8c" stroke="#555" stroke-width=".8"/><rect x="1" y="1" width="24" height="24" fill="url(#gco)" mask="url(#mgrid)"/><use href="#garrow"/></svg>
<svg class="abs" style="left:226px;top:323.5px" width="26" height="26" viewBox="0 0 26 26"><rect x=".5" y=".5" width="25" height="25" rx="1.500" fill="#8c8c8c" stroke="#555" stroke-width=".8"/><rect x="1" y="1" width="24" height="24" fill="url(#grb)" mask="url(#mgrid)"/><use href="#garrow"/></svg>
<svg class="abs" style="left:259px;top:323.5px" width="26" height="26" viewBox="0 0 26 26"><rect x=".5" y=".5" width="25" height="25" rx="1.500" fill="#8c8c8c" stroke="#555" stroke-width=".8"/><rect x="1" y="1" width="24" height="24" fill="url(#grb2)" mask="url(#mgrid)"/><use href="#garrow"/></svg>
<svg class="abs" style="left:159.5px;top:356.5px" width="27" height="27" viewBox="0 0 27 27"><rect x=".5" y=".5" width="26" height="26" rx="2.500" fill="url(#gbl)" stroke="#2a7ae0" stroke-width=".8"/><rect x="1" y="9.500" width="25" height="8.500" fill="#e82030"/><text x="13.500" y="17" font-family="Liberation Sans,sans-serif" font-weight="bold" font-size="8.500" fill="#fff" stroke="#fff" stroke-width=".5" text-anchor="middle" textLength="23" lengthAdjust="spacingAndGlyphs">AUTO</text></svg>
<svg class="abs" style="left:192.5px;top:356.5px" width="27" height="27" viewBox="0 0 27 27"><defs><linearGradient id="gsp" x1="0" y1="0" x2="0" y2="1"><stop offset="0" stop-color="#4468e4"/><stop offset=".6" stop-color="#7f98f0"/><stop offset="1" stop-color="#b4c2fa"/></linearGradient></defs><rect x=".5" y=".5" width="26" height="26" rx="2.500" fill="url(#gsp)" stroke="#5a78d8" stroke-width=".8"/><path d="M3.500 9.500h4.500l6.500-6v20l-6.500-6h-4.500z" fill="#9a6cc0" stroke="#1a1a1a" stroke-width="1.400" stroke-linejoin="round"/><path d="M16.500 8q3 5.500 0 11h3.500q2.500-5.500 0-11z" fill="#7a58a8" stroke="#1a1a1a" stroke-width="1"/><path d="M22 9.500q2 4 0 8" fill="none" stroke="#1a1a1a" stroke-width="1.300"/></svg>
<svg class="abs" style="left:156.5px;top:407px" width="21" height="21" viewBox="0 0 21 21"><rect x=".4" y=".4" width="20.200" height="20.200" rx="2" fill="url(#gbl)" stroke="#2a7ae0" stroke-width=".8"/><text x="10.500" y="9" font-family="Liberation Sans,sans-serif" font-weight="bold" font-size="6.500" fill="#fff" text-anchor="middle">NO</text><text x="10.500" y="16.500" font-family="Liberation Sans,sans-serif" font-weight="bold" font-size="6.500" fill="#fff" text-anchor="middle" textLength="17" lengthAdjust="spacingAndGlyphs">FUNC.</text></svg>
<svg class="abs" style="left:7px;top:410px" width="34" height="17" viewBox="0 0 34 17"><defs><linearGradient id="gdm" x1="0" y1="0" x2="1" y2="0"><stop offset="0" stop-color="#6a6a6a"/><stop offset="1" stop-color="#f4f4f4"/></linearGradient></defs><path d="M6 13.500L27 5v9.500z" fill="url(#gdm)"/><path d="M6 1.800a3.800 3.800 0 0 1 3.800 3.800c0 2-1.300 2.800-1.800 4.600h-4c-.5-1.800-1.800-2.600-1.800-4.600a3.800 3.800 0 0 1 3.800-3.800z" fill="#777" stroke="#333" stroke-width=".9"/><rect x="4" y="10.600" width="4" height="3.600" rx="1" fill="#333"/><path d="M28 .8a4.300 4.300 0 0 1 4.300 4.300c0 2.200-1.500 3-2.100 5h-4.400c-.6-2-2.100-2.800-2.100-5a4.300 4.300 0 0 1 4.300-4.300z" fill="#fff" stroke="#444" stroke-width=".9"/><rect x="25.800" y="10.500" width="4.400" height="3.600" rx="1" fill="#333"/></svg>
<svg class="abs" style="left:120.5px;top:406.5px" width="21" height="21" viewBox="0 0 26 26"><use href="#ibeam"/></svg>
<div class="abs" style="left:12.500px;top:431.500px;width:33px;height:33px;border:1.500px solid #fff;border-radius:3px"></div>
<svg class="abs" style="left:14.5px;top:434px" width="29.5" height="28.5"><rect x=".5" y=".5" width="28.5" height="27.5" fill="none" stroke="#fff" stroke-width="1.400"/><rect x=".5" y=".5" width="28.5" height="27.5" fill="none" stroke="#000" stroke-width="1.400" stroke-dasharray="2.500 2.500"/></svg>
<svg class="abs" style="left:16px;top:435px" width="26" height="26" viewBox="0 0 26 26"><use href="#ibeam"/></svg>
<svg class="abs" style="left:49px;top:435px" width="26" height="26" viewBox="0 0 26 26"><use href="#ibeam"/><text x="16.500" y="7.500" font-family="Liberation Sans,sans-serif" font-weight="bold" font-size="8" fill="#d01860" text-anchor="middle">1</text></svg>
<svg class="abs" style="left:82px;top:435px" width="26" height="26" viewBox="0 0 26 26"><use href="#ibeam"/><text x="16.500" y="7.500" font-family="Liberation Sans,sans-serif" font-weight="bold" font-size="8" fill="#d01860" text-anchor="middle">2</text></svg>
<svg class="abs" style="left:115px;top:435px" width="26" height="26" viewBox="0 0 26 26"><use href="#iorg"/></svg>
<svg class="abs" style="left:9px;top:475px" width="32" height="32" viewBox="0 0 32 32"><defs><radialGradient id="gkf" cx=".4" cy=".3" r=".8"><stop offset="0" stop-color="#8a8e98"/><stop offset="1" stop-color="#565a64"/></radialGradient></defs><circle cx="15.800" cy="15.600" r="14" fill="#e4ecf8" stroke="#4c9cf4" stroke-width="1.800"/><circle cx="15.800" cy="15.600" r="11.600" fill="#b4b8c0" stroke="#8cbcf6" stroke-width="1"/><path d="M15.800 1v4M15.800 26.500v4M1 15.600h4M26.500 15.600h4" stroke="#fff" stroke-width="1"/><circle cx="15.800" cy="15.600" r="9" fill="url(#gkf)" stroke="#d8dce4" stroke-width="1.400"/><path d="M17.300 17.500l1.400 3.700" stroke="#fff" stroke-width="1.700" stroke-linecap="round"/></svg>
<svg class="abs" style="left:9.5px;top:517.5px" width="29" height="29" viewBox="0 0 29 29"><circle cx="14.400" cy="14" r="12.600" fill="#fff" stroke="#333" stroke-width="1"/><path d="M14.400 4.500L25.500 24.500q.5 1.500-1 1.500h-20.200q-1.500 0-1-1.500z" fill="#3a3a3a"/><path d="M15.800 10.500l-4.300 6.500h3.200l-2.200 5h-1.500l3 3.500l2.800-3.500h-1.500l3-6.800h-3.200l2.500-4.700z" fill="#fff"/></svg>
<svg class="abs" style="left:15px;top:551.5px" width="28.5" height="27.5"><rect x=".5" y=".5" width="27.5" height="26.5" fill="none" stroke="#fff" stroke-width="1.400"/><rect x=".5" y=".5" width="27.5" height="26.5" fill="none" stroke="#000" stroke-width="1.400" stroke-dasharray="2.500 2.500"/></svg>
<svg class="abs" style="left:15.5px;top:552px" width="27" height="27" viewBox="0 0 27 27"><circle cx="13.500" cy="13" r="12.300" fill="#fff" stroke="#111" stroke-width="1"/></svg>
<svg class="abs" style="left:49px;top:552px" width="26" height="26" viewBox="0 0 26 26"><defs><linearGradient id="gtr" x1="0" y1="0" x2="0" y2="1"><stop offset="0" stop-color="#7cbcff"/><stop offset=".5" stop-color="#3a94f8"/><stop offset="1" stop-color="#2a80f0"/></linearGradient></defs><path d="M13 1.500L25.300 22.800q.5 1.200-.8 1.200h-23q-1.300 0-.8-1.200z" fill="url(#gtr)" stroke="#3a80e0" stroke-width=".6"/><path d="M14.300 7.500l-4 5.200h2.800l-2.200 4h-1.300l2.600 4.600l2.700-4.600h-1.400l2.800-5.300h-2.800l2.300-3.900z" fill="#fff"/></svg>
<svg class="abs" style="left:82px;top:552px" width="26" height="26" viewBox="0 0 26 26"><use href="#iorg"/></svg>
<svg class="abs" style="left:115px;top:552px" width="26" height="26" viewBox="0 0 26 26"><use href="#iorg"/></svg>
<svg class="abs" style="left:16px;top:585px" width="26" height="26" viewBox="0 0 26 26"><use href="#iorg"/></svg><!--/LEFT-->
<div id="cmtitle">Color mixing</div>
<div id="wheel"></div>
<svg class="abs" style="left:589px;top:606px" width="21" height="21" viewBox="0 0 21 21"><g stroke="#111" stroke-width="1" fill="none"><circle cx="10.5" cy="10.5" r="4"/><path d="M4 4L17 17M17 4L4 17"/></g></svg>
<div class="sframe" style="left:718px;top:302px;width:40px;height:319px"></div>
<div class="abs" style="left:723px;top:306px;width:32px;height:312px;background:linear-gradient(#ff22ea,#080108)"></div>
<div class="abs" style="left:723px;top:300px;width:32px;height:7px;border:1px solid #4a4030;border-bottom:none;background:#9a9ca0"></div>
<div class="abs" style="left:723px;top:306px;width:32px;height:8px;border:2px solid #08e020;border-top:none"></div>
<div class="sframe" style="left:775px;top:302px;width:41px;height:319px"></div>
<div class="abs" style="left:780px;top:306px;width:32px;height:312px;background:linear-gradient(#ffffff,#fdfdfd 2%,#1c1c1c 88%,#111)"></div>
<div class="abs" style="left:780px;top:571px;width:32px;height:13px;border:2px solid #eee"></div>
<svg class="abs" style="left:780px;top:586px" width="32" height="32" viewBox="0 0 32 32"><g transform="translate(23.700 15)" fill="#fff"><circle r="10.800"/><rect x="-2.900" y="-13.400" width="5.800" height="5" rx=".8" transform="rotate(12)"/><rect x="-2.900" y="-13.400" width="5.800" height="5" rx=".8" transform="rotate(57)"/><rect x="-2.900" y="-13.400" width="5.800" height="5" rx=".8" transform="rotate(102)"/><rect x="-2.900" y="-13.400" width="5.800" height="5" rx=".8" transform="rotate(147)"/><rect x="-2.900" y="-13.400" width="5.800" height="5" rx=".8" transform="rotate(192)"/><rect x="-2.900" y="-13.400" width="5.800" height="5" rx=".8" transform="rotate(237)"/><rect x="-2.900" y="-13.400" width="5.800" height="5" rx=".8" transform="rotate(282)"/><rect x="-2.900" y="-13.400" width="5.800" height="5" rx=".8" transform="rotate(327)"/><circle r="7.400" fill="#0c0c0c"/></g><g transform="translate(4.500 27)" fill="#fff"><circle r="5.600"/><rect x="-1.800" y="-7.600" width="3.600" height="3.500" rx=".5" transform="rotate(20)"/><rect x="-1.800" y="-7.600" width="3.600" height="3.500" rx=".5" transform="rotate(80)"/><rect x="-1.800" y="-7.600" width="3.600" height="3.500" rx=".5" transform="rotate(140)"/><rect x="-1.800" y="-7.600" width="3.600" height="3.500" rx=".5" transform="rotate(200)"/><rect x="-1.800" y="-7.600" width="3.600" height="3.500" rx=".5" transform="rotate(260)"/><rect x="-1.800" y="-7.600" width="3.600" height="3.500" rx=".5" transform="rotate(320)"/><circle r="3.600" fill="#0c0c0c"/></g></svg>
<div class="sframe" style="left:718px;top:633px;width:98px;height:34px;border-left-color:#7a7c80;border-top-color:#8f9196;border-width:4px 6px 6px 5px"></div>
<div class="abs" style="left:723px;top:637px;width:87px;height:24px;background:#ff30e8"></div>
<div class="lab" style="left:314px">R:</div><div class="inp" style="left:333px"></div>
<div class="lab" style="left:394px">G:</div><div class="inp" style="left:413px"><span>33</span><i></i><b class="u"></b><b class="d"></b></div>
<div class="lab" style="left:474px">B:</div><div class="inp" style="left:493px"><span>232</span><i></i><b class="u"></b><b class="d"></b></div>
<div class="lab" style="left:553px">W:</div><div class="inp" style="left:573px;color:#8a8a8a"><span>33</span><i style="opacity:.5"></i><b class="u" style="opacity:.25"></b><b class="d" style="opacity:.25"></b></div>

<div class="abs" style="left:1347px;top:142px;width:9px;height:19px;background:linear-gradient(#3a3a3a,#5a5a5a)"></div>
<svg class="abs" style="left:1347px;top:144px" width="9" height="14" viewBox="0 0 9 14"><path d="M3.500 2l8 9M11.500 2l-8 9" stroke="#fff" stroke-width="1.800"/></svg>
<div id="ev">
<div id="evtitle"></div>
<div id="evtabs"></div>
<div class="abs" style="left:145.200px;top:8px;color:#a3a7b0;font-size:12px;white-space:pre"><span style="letter-spacing:-0.69px">Easy View</span><span style="position:absolute;left:59.300px;top:0;letter-spacing:-0.35px">Copyright (c) Nicolaudie 1989-2017</span><span style="position:absolute;left:249.100px;top:0;letter-spacing:-0.31px">Web sit...</span></div>
<div id="evsel"></div>
<div class="evt" style="left:56.600px">Standard toolbar</div>
<div class="evt" style="left:165px;letter-spacing:-0.65px">Camera</div>
<div class="evt" style="left:232px;letter-spacing:-0.25px">View</div>
<div class="evt" style="left:286px;letter-spacing:-0.36px">Mouse</div>
<div class="evt" style="left:340px">Rendering option:</div>
<div class="evt" style="left:441.500px">?</div>
<div class="evt" style="left:461.800px">Options</div>
<div class="abs" style="left:437px;top:30px;width:1px;height:21px;background:#8db2e3"></div>
<div id="evrib"></div>
<div class="eg" style="left:7px;width:122px"><div class="cap">Mode</div></div>
<div class="eg" style="left:132px;width:103px"><div class="cap">DMX</div></div>
<div class="eg" style="left:239px;width:142px"><div class="cap">Build</div></div>
<div class="eg" style="left:384px;width:92px"><div class="cap">Undo / Redo</div></div>
<!--EV--><div class="abs" style="left:83.5px;top:57px;width:42px;height:66px;border:1px solid #d2a85e;border-bottom-color:#ffe9a0;border-radius:2px;background:linear-gradient(#fde0b4,#fcc47c 25px,#fba73c 26px,#fbb04a 45px,#ffd978 62px,#ffe89a)"></div>
<svg class="abs" style="left:30px;top:61px" width="34" height="29" viewBox="0 0 34 29"><defs><radialGradient id="hh" cx=".42" cy=".3" r=".75"><stop offset="0" stop-color="#fff2a0"/><stop offset=".35" stop-color="#ffc828"/><stop offset=".8" stop-color="#f59a10"/><stop offset="1" stop-color="#d87808"/></radialGradient></defs>
<ellipse cx="16" cy="25" rx="14" ry="3" fill="#8090a8" fill-opacity=".45"/>
<path d="M2 20.500q-2 3 3 4.500q9 2.500 16-1q8-3.500 11.500-8.500q1.500-3-1.500-3.500z" fill="#f0a018" stroke="#c87808" stroke-width=".6"/>
<path d="M4 20q-1-12 9.500-16.500q9-3.500 15 1.500q3.500 3.500 3 8q-4 5.500-12 8.500q-8 2.500-15.500-1.500z" fill="url(#hh)" stroke="#d08408" stroke-width=".6"/>
<path d="M12.500 4.500q2.500 8 2.500 17.500M17.500 3q3.500 8 3.500 17" fill="none" stroke="#e09010" stroke-width="1"/>
<path d="M5 22q8 4 15 1" fill="none" stroke="#fff6c8" stroke-width="1.200" stroke-opacity=".8"/><circle cx="27.500" cy="13.500" r="1" fill="#fff2b0"/><circle cx="17.500" cy="20.500" r=".9" fill="#fff2b0"/></svg>
<div class="el" style="left:-13.399999999999977px;width:120px;top:96px;"><span style="letter-spacing:-0.10px">Construction</span><br><span style="letter-spacing:-0.55px">mode</span></div>
<svg class="abs" style="left:90px;top:66px" width="28" height="20" viewBox="0 0 28 20"><defs><radialGradient id="ey" cx=".5" cy=".45" r=".55"><stop offset="0" stop-color="#111"/><stop offset=".32" stop-color="#1a1a2a"/><stop offset=".4" stop-color="#2a6cd0"/><stop offset=".8" stop-color="#1c50b0"/><stop offset="1" stop-color="#0c2c70"/></radialGradient></defs>
<ellipse cx="14" cy="15.500" rx="11" ry="3" fill="#705020" fill-opacity=".35"/>
<path d="M1 10.500q6-8.500 13-8.500t13 8.500q-6 7.500-13 7.500t-13-7.500z" fill="#fff" stroke="#222" stroke-width="1.300"/>
<circle cx="14" cy="9.800" r="6.800" fill="url(#ey)"/><circle cx="12" cy="7.500" r="1.500" fill="#fff" fill-opacity=".75"/></svg>
<div class="el" style="left:43.799999999999955px;width:120px;top:96px;"><span style="letter-spacing:-0.70px">User</span><br><span style="letter-spacing:-0.55px">mode</span></div>
<svg class="abs" style="left:144.5px;top:63px" width="26" height="26" viewBox="0 0 26 26"><rect width="25.500" height="25.500" fill="#0c0c0c"/><rect x="1.5" y="1.8" width="4.800" height="1.900" fill="#c81818"/><rect x="1.5" y="4.8" width="4.800" height="1.900" fill="#c81818"/><rect x="1.5" y="7.8" width="4.800" height="1.900" fill="#d8d810"/><rect x="1.5" y="10.8" width="4.800" height="1.900" fill="#d8d810"/><rect x="1.5" y="13.8" width="4.800" height="1.900" fill="#10c010"/><rect x="1.5" y="16.8" width="4.800" height="1.900" fill="#18e018"/><rect x="1.5" y="19.8" width="4.800" height="1.900" fill="#10c010"/><rect x="1.5" y="22.8" width="4.800" height="1.900" fill="#18e018"/><rect x="7.5" y="1.8" width="4.800" height="1.900" fill="#c81818"/><rect x="7.5" y="4.8" width="4.800" height="1.900" fill="#ff2020"/><rect x="7.5" y="7.8" width="4.800" height="1.900" fill="#d8d810"/><rect x="7.5" y="10.8" width="4.800" height="1.900" fill="#ffff20"/><rect x="7.5" y="13.8" width="4.800" height="1.900" fill="#18e018"/><rect x="7.5" y="16.8" width="4.800" height="1.900" fill="#10c010"/><rect x="7.5" y="19.8" width="4.800" height="1.900" fill="#18e018"/><rect x="7.5" y="22.8" width="4.800" height="1.900" fill="#10c010"/><rect x="13.5" y="1.8" width="4.800" height="1.900" fill="#c81818"/><rect x="13.5" y="4.8" width="4.800" height="1.900" fill="#ff2020"/><rect x="13.5" y="7.8" width="4.800" height="1.900" fill="#d8d810"/><rect x="13.5" y="10.8" width="4.800" height="1.900" fill="#ffff20"/><rect x="13.5" y="13.8" width="4.800" height="1.900" fill="#10c010"/><rect x="13.5" y="16.8" width="4.800" height="1.900" fill="#18e018"/><rect x="13.5" y="19.8" width="4.800" height="1.900" fill="#10c010"/><rect x="13.5" y="22.8" width="4.800" height="1.900" fill="#18e018"/><rect x="19.5" y="1.8" width="4.800" height="1.900" fill="#c81818"/><rect x="19.5" y="4.8" width="4.800" height="1.900" fill="#c81818"/><rect x="19.5" y="7.8" width="4.800" height="1.900" fill="#d8d810"/><rect x="19.5" y="10.8" width="4.800" height="1.900" fill="#d8d810"/><rect x="19.5" y="13.8" width="4.800" height="1.900" fill="#18e018"/><rect x="19.5" y="16.8" width="4.800" height="1.900" fill="#10c010"/><rect x="19.5" y="19.8" width="4.800" height="1.900" fill="#18e018"/><rect x="19.5" y="22.8" width="4.800" height="1.900" fill="#10c010"/></svg>
<div class="el" style="left:96.79999999999995px;width:120px;top:96px;"><span style="letter-spacing:-0.70px">DMX</span><br><span style="letter-spacing:-0.58px">level</span></div>
<svg class="abs" style="left:189px;top:60px" width="31" height="30" viewBox="0 0 31 30"><defs><radialGradient id="gl" cx=".4" cy=".3" r=".8"><stop offset="0" stop-color="#dde4f2"/><stop offset=".6" stop-color="#a6b2cc"/><stop offset="1" stop-color="#7f8cac"/></radialGradient></defs><circle cx="15.600" cy="15" r="13.800" fill="url(#gl)"/><path d="M11 13q4-1 7 1l3 2q1 2-1 3.500l-2.500 4q-1.500 2-2.500 0l-1-4q-3-2-3-4.500z" fill="#e6ebf6" fill-opacity=".85"/><path d="M20 2.500q3 1 4 3l-3 1z" fill="#e6ebf6" fill-opacity=".7"/><text x="15.600" y="12.500" font-family="Liberation Sans,sans-serif" font-weight="bold" font-size="9.500" fill="#eef2fa" text-anchor="middle" textLength="24" lengthAdjust="spacingAndGlyphs">DMX</text></svg>
<div class="el" style="left:144.29999999999995px;width:120px;top:96px;color:#a1a3ae"><span style="letter-spacing:-0.62px">Universes</span><br><span style="letter-spacing:-0.31px">patch</span></div>
<svg class="abs" style="left:246px;top:59px" width="16" height="17" viewBox="0 0 16 17"><rect x="2" y="13.500" width="12" height="3" rx="1" fill="#3a2a1a"/><path d="M3.500 4q0-2.500 2-3h5q2 .5 2 3v7.500h-9z" fill="#2a2a2e" stroke="#111" stroke-width=".6"/><circle cx="8" cy="8.500" r="3.300" fill="#8a8e98" stroke="#111" stroke-width=".6"/><circle cx="8" cy="8.500" r="1.600" fill="#d8dce6"/><rect x="4.500" y="1.500" width="3" height="2.500" fill="#3a78e0"/></svg>
<div class="el" style="left:265.5999999999999px;top:61.5px;text-align:left;"><span style="letter-spacing:-0.31px">Add fixture(s)</span></div>
<svg class="abs" style="left:245px;top:82px" width="18" height="16" viewBox="0 0 18 16"><path d="M1.500 10.500l6-4l9 3.500l-6 4.500z" fill="#e07818" stroke="#7a3808" stroke-width=".7"/><path d="M1.500 10.500v2.500l9 4v-2.500z" fill="#a84808" stroke="#7a3808" stroke-width=".5"/><path d="M10.500 14.500l6-4.500v2.500l-6 4.500z" fill="#c05c10" stroke="#7a3808" stroke-width=".5"/><path d="M5.500 6l3.500-2.500l5 2l-3.500 2.500z" fill="#f09838" stroke="#7a3808" stroke-width=".6"/><path d="M5.500 6v2.500l5 2v-2.500z" fill="#c86010"/><path d="M7.500 3.500l2-1.500l2.500 1l-2 1.500z" fill="#f8b060" stroke="#7a3808" stroke-width=".5"/></svg>
<div class="el" style="left:265.5999999999999px;top:83.5px;text-align:left;"><span style="letter-spacing:-0.30px">Stage settings...</span></div>
<svg class="abs" style="left:245px;top:103px" width="18" height="18" viewBox="0 0 18 18"><path d="M5.500 5.500h9.500v9.500h-9.500zM5.500 5.500l-3.500-3h9.500l3.500 3M2 2.500v9.500l3.500 3" fill="none" stroke="#1c2c90" stroke-width="1.200"/><path d="M2.500 4.500l6.500 13h-6.500z" fill="#f8a020" stroke="#b86808" stroke-width=".7"/><path d="M4.200 10.500l2 4.500h-2z" fill="#c8d8f0"/></svg>
<div class="el" style="left:265.5999999999999px;top:105.5px;text-align:left;"><span style="letter-spacing:-0.19px">Simple objects editor</span></div>
<svg class="abs" style="left:397px;top:64px" width="25" height="23" viewBox="0 0 25 23"><g transform="translate(0 1)"><path d="M3 1.500v9.500h9.500l-3.600-3.400q4.500-2.200 7 .5q2.500 3.500-.5 7.500q-2 2.200-5 3.500q8-1 10.500-6.500q2-6-3-9.500q-5.500-3-11.500 1.200z" fill="#a4b4d0" stroke="#8c9cbc" stroke-width=".7"/></g></svg>
<svg class="abs" style="left:440px;top:64px" width="25" height="23" viewBox="0 0 25 23"><g transform="translate(25 1) scale(-1 1)"><path d="M3 1.500v9.500h9.500l-3.600-3.400q4.500-2.200 7 .5q2.500 3.500-.5 7.500q-2 2.200-5 3.500q8-1 10.500-6.500q2-6-3-9.500q-5.500-3-11.500 1.200z" fill="#a4b4d0" stroke="#8c9cbc" stroke-width=".7"/></g></svg>
<div class="el" style="left:348.4000000000001px;width:120px;top:96px;color:#9d9fa9"><span style="letter-spacing:-0.20px">Undo</span></div>
<div class="el" style="left:390.4000000000001px;width:120px;top:96px;color:#9d9fa9"><span style="letter-spacing:-0.62px">Redo</span></div>
<svg class="abs" style="left:0px;top:0px" width="150" height="52" viewBox="0 0 150 52"><defs><radialGradient id="o3" cx=".45" cy=".3" r=".8"><stop offset="0" stop-color="#6a6a78"/><stop offset=".5" stop-color="#2a2a34"/><stop offset="1" stop-color="#08080c"/></radialGradient><linearGradient id="o3r" x1="0" y1="0" x2="0" y2="1"><stop offset="0" stop-color="#ffffff"/><stop offset=".5" stop-color="#dfe6f0"/><stop offset="1" stop-color="#b8c4d8"/></linearGradient><linearGradient id="pgd" x1="0" y1="0" x2="1" y2="1"><stop offset="0" stop-color="#ffffff"/><stop offset="1" stop-color="#c4d6f8"/></linearGradient><linearGradient id="fld" x1="0" y1="0" x2="0" y2="1"><stop offset="0" stop-color="#ffe878"/><stop offset="1" stop-color="#e8b820"/></linearGradient></defs>
<path d="M40 5.500h75a10.500 10.500 0 0 1 0 21h-62q2-11-13-21z" fill="#d3dff0" stroke="#b9c9e2" stroke-width="1"/>
<circle cx="25.400" cy="25.100" r="17.600" fill="url(#o3r)" stroke="#9aa8c0" stroke-width="1"/><circle cx="25.400" cy="25.100" r="14" fill="url(#o3)"/>
<g fill="#fff"><circle cx="15.500" cy="19.500" r="1"/><circle cx="17.500" cy="16.800" r="1.100"/><circle cx="20.300" cy="14.800" r="1"/><circle cx="23.500" cy="13.800" r=".8"/><circle cx="15" cy="23" r=".8"/></g>
<text x="25.600" y="31" font-family="Liberation Sans,sans-serif" font-weight="bold" font-size="14" fill="#fff" text-anchor="middle" textLength="19" lengthAdjust="spacingAndGlyphs">3D</text>
<path d="M56.500 9h8.500l4 4v10.500h-12.500z" fill="url(#pgd)" stroke="#8a98b8" stroke-width=".8"/><path d="M57 23.500h12v-10" fill="none" stroke="#444" stroke-width="1"/><path d="M65 9l4 4h-4z" fill="#6aa0f0"/>
<path d="M77.500 13h5l1.500 2h8v8.500h-14.500z" fill="#e8c030" stroke="#b89018" stroke-width=".6"/><path d="M77.500 23.500l2.500-7h13.500l-2.500 7z" fill="url(#fld)" stroke="#c8a020" stroke-width=".6"/><path d="M86 9.500q4-2 6 1l1.500-1v4.500h-4.500l1.500-1.500q-1.500-2-4.500-3z" fill="#3a78d8" stroke="#2050a8" stroke-width=".5"/>
<rect x="100.500" y="9.500" width="13.500" height="12.500" rx="1" fill="#4040c8" stroke="#2828a0" stroke-width=".7"/><rect x="103" y="10" width="8.500" height="5.500" fill="#fff"/><path d="M104 11.800h6.500M104 13.800h6.500" stroke="#aab" stroke-width=".7"/><rect x="104" y="17.500" width="6.500" height="4.500" fill="#d8dcf0"/><rect x="105" y="18.300" width="2" height="3" fill="#3030a0"/>
<path d="M133.500 12.800h5.500" stroke="#2038a0" stroke-width="1.300"/><path d="M133.500 15l2.750 3.200l2.750-3.200z" fill="#2038a0"/></svg>
<svg class="abs" style="left:448px;top:6px" width="62" height="16" viewBox="0 0 62 16"><path d="M4 11.600h7" stroke="#fff" stroke-width="1"/><path d="M4 10.600h7" stroke="#a2aebf" stroke-width="1.400"/>
<rect x="26.500" y="5.500" width="8.500" height="6.500" fill="none" stroke="#a2aebf" stroke-width="1"/><path d="M26 6.300h9.500" stroke="#a2aebf" stroke-width="2"/><path d="M26 13.200h9.500" stroke="#fff" stroke-width="1"/>
<path d="M49.500 4.500l8 7.500M57.500 4.500l-8 7.500" stroke="#a8b4c6" stroke-width="1.800"/></svg>
<svg class="abs" style="left:449px;top:37px" width="8" height="6" viewBox="0 0 8 6"><path d="M.8 1h5.400l-2.700 3.200z" fill="#4a68a8"/></svg>
<svg class="abs" style="left:505px;top:37px" width="8" height="6" viewBox="0 0 8 6"><path d="M.8 1h5.400l-2.700 3.200z" fill="#4a68a8"/></svg><!--/EV-->
<div id="view3d"><!--3D--><svg class="abs" style="left:0;top:0" width="509" height="446" viewBox="0 0 509 446"><rect width="509" height="446" fill="#393939"/><polygon points="242,19 509,0 509,270.500 242,232" fill="#343434"/><polygon points="138,0 242,19 305,0" fill="#333"/><polygon points="0,256.500 242,232 509,270.500 509,446 0,446" fill="#353535"/><ellipse cx="50.3" cy="114.6" rx="6" ry="3" fill="#242424"/><path d="M44.5 116.5h2M55 116.5h2" stroke="#aaa" stroke-width=".8"/><defs><linearGradient id="cg1" gradientUnits="userSpaceOnUse" x1="0" y1="117.5" x2="0" y2="264.5"><stop offset="0" stop-color="#e040e6" stop-opacity=".15"/><stop offset=".35" stop-color="#de3ee2" stop-opacity=".095"/><stop offset="1" stop-color="#d83cdc" stop-opacity=".078"/></linearGradient></defs><polygon points="49.3,117.5 30.3,264.0 86.3,264.0 51.3,117.5" fill="url(#cg1)"/><polygon points="49.3,117.5 31.1,264.0 85.5,264.0 51.3,117.5" fill="url(#cg1)"/><polygon points="49.3,117.5 32.0,264.0 84.6,264.0 51.3,117.5" fill="url(#cg1)"/><polygon points="49.3,117.5 32.8,264.0 83.8,264.0 51.3,117.5" fill="url(#cg1)"/><polygon points="49.3,117.5 33.7,264.0 82.9,264.0 51.3,117.5" fill="url(#cg1)"/><polygon points="49.3,117.5 34.5,264.0 82.1,264.0 51.3,117.5" fill="url(#cg1)"/><polygon points="49.3,117.5 35.3,264.0 81.3,264.0 51.3,117.5" fill="url(#cg1)"/><polygon points="49.3,117.5 36.2,264.0 80.4,264.0 51.3,117.5" fill="url(#cg1)"/><polygon points="49.3,117.5 37.0,264.0 79.6,264.0 51.3,117.5" fill="url(#cg1)"/><polygon points="49.3,117.5 37.9,264.0 78.7,264.0 51.3,117.5" fill="url(#cg1)"/><polygon points="49.3,117.5 38.7,264.0 77.9,264.0 51.3,117.5" fill="url(#cg1)"/><polygon points="49.3,117.5 39.5,264.0 77.1,264.0 51.3,117.5" fill="url(#cg1)"/><ellipse cx="58.3" cy="264.8" rx="28" ry="4.6" fill="#e23ee2" transform="rotate(-2 58.3 264.8)"/><path d="M357.2 15 v12 a15.3 3.6 0 0 0 30.6 0 v-12z" fill="#272727"/><ellipse cx="372.5" cy="15" rx="15.3" ry="3.5" fill="#2b2b2b"/><path d="M357.2 15.8 a15.3 3.5 0 0 1 30.6 -1" fill="none" stroke="#8c8c8c" stroke-width=".9"/><ellipse cx="372.5" cy="27.2" rx="16.3" ry="3.6" fill="#2a2a2a"/><path d="M356.4 28 a16.3 3.6 0 0 1 32.4 -1.6" fill="none" stroke="#909090" stroke-width=".9"/><ellipse cx="372.5" cy="27.8" rx="13" ry="3" fill="#78877f"/><defs><linearGradient id="cg2" gradientUnits="userSpaceOnUse" x1="0" y1="28" x2="0" y2="404"><stop offset="0" stop-color="#e040e6" stop-opacity=".15"/><stop offset=".35" stop-color="#de3ee2" stop-opacity=".095"/><stop offset="1" stop-color="#d83cdc" stop-opacity=".078"/></linearGradient></defs><polygon points="369.5,28 302.4,401.1 438.4,401.1 375.5,28" fill="url(#cg2)"/><polygon points="369.5,28 304.4,401.1 436.4,401.1 375.5,28" fill="url(#cg2)"/><polygon points="369.5,28 306.5,401.1 434.3,401.1 375.5,28" fill="url(#cg2)"/><polygon points="369.5,28 308.5,401.1 432.3,401.1 375.5,28" fill="url(#cg2)"/><polygon points="369.5,28 310.6,401.1 430.2,401.1 375.5,28" fill="url(#cg2)"/><polygon points="369.5,28 312.6,401.1 428.2,401.1 375.5,28" fill="url(#cg2)"/><polygon points="369.5,28 314.6,401.1 426.2,401.1 375.5,28" fill="url(#cg2)"/><polygon points="369.5,28 316.7,401.1 424.1,401.1 375.5,28" fill="url(#cg2)"/><polygon points="369.5,28 318.7,401.1 422.1,401.1 375.5,28" fill="url(#cg2)"/><polygon points="369.5,28 320.8,401.1 420.0,401.1 375.5,28" fill="url(#cg2)"/><polygon points="369.5,28 322.8,401.1 418.0,401.1 375.5,28" fill="url(#cg2)"/><polygon points="369.5,28 324.8,401.1 416.0,401.1 375.5,28" fill="url(#cg2)"/><ellipse cx="372.5" cy="28.5" rx="3" ry="1.3" fill="#e050e4"/><ellipse cx="370.4" cy="404.9" rx="68" ry="28.6" fill="#e23ee2" transform="rotate(4 370.4 404.9)"/></svg><div class="abs" style="left:0;top:0;right:0;bottom:0;border:1px solid #0a0a3a;border-left-width:2px;border-top-width:2px;border-right-color:#dfe9f7;border-bottom-color:#dfe9f7"></div><!--/3D--></div>
<div id="evstat"></div>
<div id="evstat2"><span style="left:7.0px;letter-spacing:-0.15px;font-size:12px">Controlled by Sunlite Suite2</span><span style="left:170.5px;letter-spacing:0px;font-size:12px">|</span><span style="left:182.2px;letter-spacing:-0.55px;font-size:11px">ECO MODE</span><span style="left:246.0px;letter-spacing:0px;font-size:12px">|</span><span style="left:257.3px;letter-spacing:-0.23px;font-size:11px">DMX ON</span></div>
<svg class="abs" style="left:450px;top:593px" width="66" height="21" viewBox="0 0 66 21"><defs><radialGradient id="led" cx=".5" cy=".7" r=".7"><stop offset="0" stop-color="#a0ff80"/><stop offset=".5" stop-color="#30e820"/><stop offset="1" stop-color="#20c818"/></radialGradient></defs><circle cx="8.700" cy="10.300" r="6" fill="url(#led)"/><path d="M26 4h10.500l-1 9q-1 3-4 3h-3.500q-2.500-2-2-5z" fill="#2a2c34" stroke="#15161c" stroke-width=".6"/><circle cx="29" cy="12.500" r="3" fill="#9aa0ac" stroke="#333" stroke-width=".6"/><path d="M28.500 5h6v4h-6z" fill="#4a4e5a"/><g fill="#4a5f98"><rect x="58" y="7" width="1.800" height="1.800"/><rect x="58" y="10.500" width="1.800" height="1.800"/><rect x="58" y="14" width="1.800" height="1.800"/><rect x="54.500" y="10.500" width="1.800" height="1.800"/><rect x="54.500" y="14" width="1.800" height="1.800"/><rect x="51" y="14" width="1.800" height="1.800"/></g></svg>
</div>
</body></html>
